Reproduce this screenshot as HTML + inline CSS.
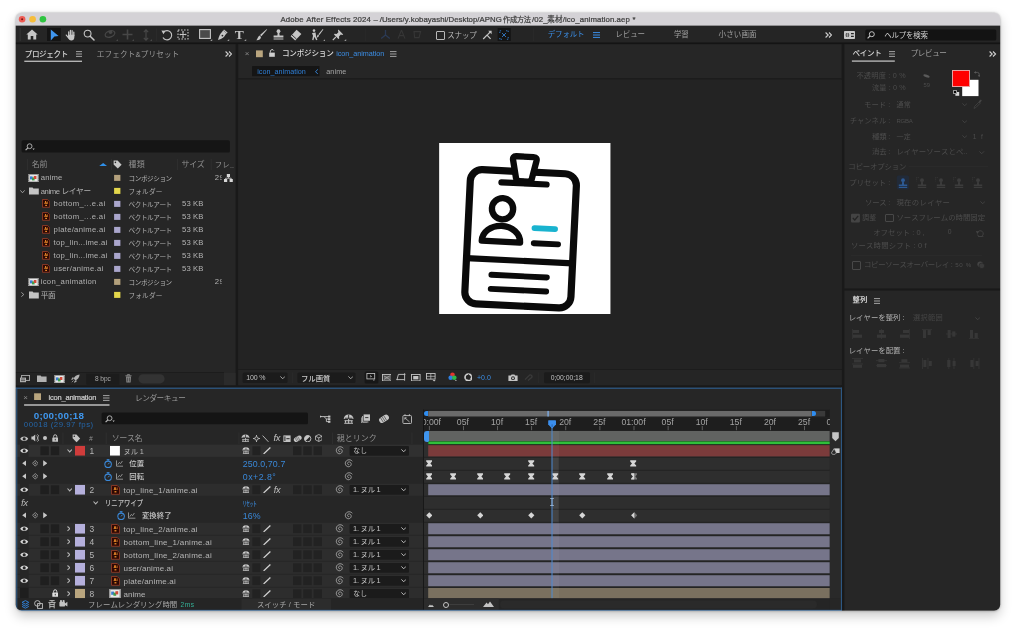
<!DOCTYPE html>
<html lang="ja"><head><meta charset="utf-8"><title>Adobe After Effects 2024</title>
<style>
html,body{margin:0;padding:0;background:#fff;}
#root{position:relative;width:1016px;height:630px;overflow:hidden;background:#fff;font-family:"Liberation Sans","Noto Sans CJK JP",sans-serif;}
#shadow{position:absolute;left:15.7px;top:12.8px;width:984.5px;height:598px;border-radius:6px;box-shadow:0 5px 12px rgba(0,0,0,.21),0 0 2.5px rgba(0,0,0,.32);}
#win{position:absolute;left:0;top:0;width:1016px;height:630px;clip-path:inset(12.8px 15.8px 19.2px 15.7px round 6px);will-change:transform;}
#win div,#win svg,#win span{position:absolute;}
#win span.t{white-space:nowrap;font-kerning:none;}
</style></head>
<body><div id="root"><div id="shadow"></div><div id="win">
<svg style="left:0;top:0;" width="1016" height="630" viewBox="0 0 1016 630"><rect x="0" y="0" width="1016" height="26" fill="#d4d2d6"/></svg>
<svg style="left:17px;top:14px;" width="32" height="11" viewBox="0 0 32 11"><circle cx="5.1" cy="5.3" r="3.3" fill="#ee5c54"/><circle cx="15.6" cy="5.3" r="3.3" fill="#f6bd3b"/><circle cx="25.9" cy="5.3" r="3.3" fill="#2fc441"/><circle cx="5.1" cy="5.3" r="1" fill="#7a1410"/></svg>
<span id="t1" class="t" style="left:280.49px;top:13.8px;font-size:7.8px;line-height:12px;color:#3c3c3c;letter-spacing:0.16px;-webkit-text-stroke:0.22px #3c3c3c;">Adobe After Effects 2024</span>
<span id="t2" class="t" style="left:373.4px;top:13.8px;font-size:7.8px;line-height:12px;color:#3c3c3c;-webkit-text-stroke:0.22px #3c3c3c;">–</span>
<span id="t3" class="t" style="left:379.69px;top:13.8px;font-size:7.8px;line-height:12px;color:#3c3c3c;letter-spacing:0.04px;-webkit-text-stroke:0.22px #3c3c3c;">/Users/y.kobayashi/Desktop/APNG</span>
<span id="t4" class="t" style="left:503.01px;top:13.7px;font-size:7.2px;line-height:12px;color:#3c3c3c;letter-spacing:-0.23px;-webkit-text-stroke:0.22px #3c3c3c;">作成方法</span>
<span id="t5" class="t" style="left:531.99px;top:13.8px;font-size:7.8px;line-height:12px;color:#3c3c3c;letter-spacing:0.15px;-webkit-text-stroke:0.22px #3c3c3c;">/02_</span>
<span id="t6" class="t" style="left:547.3px;top:13.7px;font-size:7.6px;line-height:12px;color:#3c3c3c;letter-spacing:0.02px;-webkit-text-stroke:0.22px #3c3c3c;">素材</span>
<span id="t7" class="t" style="left:562.79px;top:13.8px;font-size:7.8px;line-height:12px;color:#3c3c3c;letter-spacing:0.09px;-webkit-text-stroke:0.22px #3c3c3c;">/ico_animation.aep</span>
<span id="t8" class="t" style="left:632.6px;top:13.9px;font-size:7.8px;line-height:12px;color:#3c3c3c;-webkit-text-stroke:0.22px #3c3c3c;">*</span>
<svg style="left:0;top:0;" width="1016" height="630" viewBox="0 0 1016 630"><rect x="0" y="25.8" width="1016" height="17.4" fill="#1d1d1d"/><rect x="0" y="43.2" width="1016" height="586.8" fill="#191919"/><rect x="0" y="25.8" width="1016" height="16.8" fill="#252525"/><rect x="0" y="42.6" width="1016" height="1.6" fill="#141414"/><rect x="19.4" y="28" width="1.6" height="13" fill="#2f2f2f"/></svg>
<svg style="left:26.3px;top:29px;" width="12" height="11" viewBox="0 0 12 11"><path d="M6 0.6 L0.3 5.6 H1.8 V10.4 H4.7 V7 H7.3 V10.4 H10.2 V5.6 H11.7 Z" fill="#c6c6c6"/></svg>
<svg style="left:0;top:0;" width="1016" height="630" viewBox="0 0 1016 630"><rect x="47" y="28" width="13.8" height="13" fill="#141414"/></svg>
<svg style="left:49.8px;top:28.5px;" width="9" height="12" viewBox="0 0 9 12"><path d="M0.8 0.5 L8.6 7 L4.4 7.6 L0.8 11.5 Z" fill="#3f95ee"/></svg>
<svg style="left:65px;top:28.5px;" width="12" height="12" viewBox="0 0 12 12"><path d="M3.7 6.6 V2.8 M5.4 6 V1.3 M7.1 6 V1.5 M8.8 6.6 V3 M3.6 8.8 L1.3 6.1" stroke="#c6c6c6" stroke-width="1.25" stroke-linecap="round" fill="none"/><path d="M3.1 5.8 H9.4 V8 C9.4 10.4 8 11.5 6.4 11.5 C4.6 11.5 3.6 10.4 2.9 8.8 Z" fill="#c6c6c6"/></svg>
<svg style="left:82.5px;top:28.5px;" width="12" height="12" viewBox="0 0 12 12"><circle cx="4.6" cy="4.6" r="3.4" fill="none" stroke="#c6c6c6" stroke-width="1.1"/><path d="M7.2 7.2 L11 11" stroke="#c6c6c6" stroke-width="1.5" stroke-linecap="round"/></svg>
<svg style="left:103.9px;top:29px;" width="13" height="11" viewBox="0 0 13 11"><ellipse cx="6" cy="5" rx="5" ry="3" fill="none" stroke="#474747" stroke-width="1.2" transform="rotate(-20 6 5)"/><circle cx="6.5" cy="3.2" r="1.8" fill="#474747"/></svg>
<svg style="left:121.5px;top:29px;" width="11" height="11" viewBox="0 0 11 11"><path d="M5.5 0.5 V10.5 M0.5 5.5 H10.5" stroke="#474747" stroke-width="1.6"/></svg>
<svg style="left:143px;top:28.5px;" width="6" height="12" viewBox="0 0 6 12"><path d="M3 1 V11 M0.8 3.2 L3 0.8 L5.2 3.2 M0.8 8.8 L3 11.2 L5.2 8.8" stroke="#474747" stroke-width="1.2" fill="none"/></svg>
<svg style="left:115.5px;top:39px;" width="2" height="2" viewBox="0 0 2 2"><path d="M2 0 V2 H0 Z" fill="#474747"/></svg>
<svg style="left:131.5px;top:39px;" width="2" height="2" viewBox="0 0 2 2"><path d="M2 0 V2 H0 Z" fill="#474747"/></svg>
<svg style="left:149.5px;top:39px;" width="2" height="2" viewBox="0 0 2 2"><path d="M2 0 V2 H0 Z" fill="#474747"/></svg>
<svg style="left:0;top:0;" width="1016" height="630" viewBox="0 0 1016 630"><rect x="156" y="28.5" width="0.8" height="12.5" fill="#2c2c2c"/></svg>
<svg style="left:160.5px;top:28.5px;" width="12" height="12" viewBox="0 0 12 12"><path d="M2.6 3.2 A4.6 4.6 0 1 1 2 8.4" fill="none" stroke="#c6c6c6" stroke-width="1.1"/><path d="M0.4 1.6 L4.6 1.8 L2.4 5.2 Z" fill="#c6c6c6"/></svg>
<svg style="left:177.2px;top:29px;" width="12" height="11" viewBox="0 0 12 11"><rect x="1" y="1" width="10" height="9" fill="none" stroke="#c6c6c6" stroke-width="1.1" stroke-dasharray="1.6 1.4"/><path d="M6 2.6 V8.4 M3 5.5 H9" stroke="#c6c6c6" stroke-width="1"/><path d="M6 1.8 L7 3.2 H5 Z M6 9.2 L7 7.8 H5 Z M2.2 5.5 L3.6 4.5 V6.5 Z M9.8 5.5 L8.4 4.5 V6.5 Z" fill="#c6c6c6"/></svg>
<svg style="left:199.2px;top:29.1px;" width="12" height="10" viewBox="0 0 12 10"><rect x="0.6" y="0.6" width="10.8" height="8.8" fill="#4a4a4a" stroke="#c6c6c6" stroke-width="1.1"/></svg>
<svg style="left:216.9px;top:28.5px;" width="11" height="12" viewBox="0 0 11 12"><path d="M6.2 1.2 L9.6 4.4 L8.4 5.8 C7.6 8 5.4 9.8 1 11 C2 6.8 3.4 4.6 5 3 Z" fill="#c6c6c6"/><path d="M7 0.4 L10.6 3.6 L9.8 4.4 L6.4 1.2 Z" fill="#c6c6c6"/><circle cx="5.4" cy="6.6" r="0.9" fill="#252525"/></svg>
<span id="t9" class="t" style="left:239.3px;top:28.5px;font-size:13.5px;line-height:12px;color:#c6c6c6;font-weight:700;transform:translateX(-50%);font-family:'Liberation Serif',serif;">T</span>
<svg style="left:255.5px;top:28.5px;" width="12" height="12" viewBox="0 0 12 12"><path d="M11.2 0.6 L5.4 7.2 L4 6 L10.6 0.2 Z" fill="#c6c6c6"/><path d="M3.6 6.6 L5 8 C4.8 10.4 2.6 11.4 0.4 11.2 C1.8 10 1.6 7.4 3.6 6.6 Z" fill="#c6c6c6"/></svg>
<svg style="left:272.6px;top:29px;" width="11" height="11" viewBox="0 0 11 11"><circle cx="5.5" cy="2.2" r="1.9" fill="#c6c6c6"/><path d="M4.7 3.4 H6.3 L6.6 6.6 H10.4 V8.6 H0.6 V6.6 H4.4 Z M0.6 9.4 H10.4 V10.6 H0.6 Z" fill="#c6c6c6"/></svg>
<svg style="left:289.6px;top:28.5px;" width="12" height="12" viewBox="0 0 12 12"><path d="M6.6 0.8 L11.4 5 L5.2 11.4 L0.6 7.2 Z" fill="#c6c6c6"/><path d="M1.9 5.9 L6.5 10.1" stroke="#252525" stroke-width="0.9"/></svg>
<svg style="left:311px;top:28.5px;" width="13" height="12" viewBox="0 0 13 12"><circle cx="3" cy="1.6" r="1.3" fill="#c6c6c6"/><path d="M1 4 L4.6 3.6 L5 7 L6.4 10.8 L5.2 11.2 L3.4 7.8 L2.4 11.2 L1.2 11 L2 6.8 Z" fill="#c6c6c6"/><path d="M12.4 0.4 L8.4 6 L7.4 5.2 L11.8 0 Z" fill="#c6c6c6"/><path d="M7 5.6 L8 6.6 C7.8 8.2 6.6 8.6 5.6 8.4 C6.4 7.6 6 6.2 7 5.6 Z" fill="#c6c6c6"/></svg>
<svg style="left:332.1px;top:28.5px;" width="12" height="12" viewBox="0 0 12 12"><path d="M6.4 0.6 L11.2 5.4 L10.2 6 L8.8 5.6 L7 7.4 L7.2 9.4 L6.4 10 L2 5.6 L2.6 4.8 L4.6 5 L6.4 3.2 L6 1.6 Z" fill="#c6c6c6"/><path d="M3.8 8 L0.8 11.2" stroke="#c6c6c6" stroke-width="1.1"/></svg>
<svg style="left:210.4px;top:38.9px;" width="2.2" height="2.2" viewBox="0 0 2.2 2.2"><path d="M2.2 0 V2.2 H0 Z" fill="#9a9a9a"/></svg>
<svg style="left:227.4px;top:38.9px;" width="2.2" height="2.2" viewBox="0 0 2.2 2.2"><path d="M2.2 0 V2.2 H0 Z" fill="#9a9a9a"/></svg>
<svg style="left:244.4px;top:38.9px;" width="2.2" height="2.2" viewBox="0 0 2.2 2.2"><path d="M2.2 0 V2.2 H0 Z" fill="#9a9a9a"/></svg>
<svg style="left:322.9px;top:38.9px;" width="2.2" height="2.2" viewBox="0 0 2.2 2.2"><path d="M2.2 0 V2.2 H0 Z" fill="#9a9a9a"/></svg>
<svg style="left:344.4px;top:38.9px;" width="2.2" height="2.2" viewBox="0 0 2.2 2.2"><path d="M2.2 0 V2.2 H0 Z" fill="#9a9a9a"/></svg>
<svg style="left:0;top:0;" width="1016" height="630" viewBox="0 0 1016 630"><rect x="365.5" y="28.5" width="0.7" height="12.5" fill="#2c2c2c"/></svg>
<svg style="left:379.5px;top:29px;" width="11" height="11" viewBox="0 0 11 11"><path d="M5.5 1 V6 L1.2 9.6 M5.5 6 L9.8 9.6" stroke="#2b3a55" stroke-width="1.3" fill="none"/></svg>
<svg style="left:395.9px;top:29px;" width="11" height="11" viewBox="0 0 11 11"><path d="M5.5 1 L2 9.6 M5.5 1 L9 9.6 M3.2 6.6 H7.8" stroke="#363636" stroke-width="1.1" fill="none"/></svg>
<svg style="left:412.1px;top:29px;" width="11" height="11" viewBox="0 0 11 11"><path d="M2 2.6 H8.6 L7 8.6 H2.6 Z" stroke="#363636" stroke-width="1.1" fill="none"/></svg>
<div style="left:435.6px;top:31px;width:9.4px;height:9px;box-sizing:border-box;border:1.1px solid #b8b8b8;border-radius:1px;"></div>
<span id="t10" class="t" style="left:447.3px;top:30.2px;font-size:7.5px;line-height:12px;color:#b8b8b8;letter-spacing:-0.2px;">スナップ</span>
<svg style="left:482px;top:30px;" width="10" height="10" viewBox="0 0 10 10"><path d="M1.2 9 L5 5.2 L8.6 8.8" stroke="#c6c6c6" stroke-width="1.2" fill="none"/><path d="M5.4 4.8 L8.2 2" stroke="#c6c6c6" stroke-width="1.1"/><path d="M6.2 0.8 H9.6 V4.2 Z" fill="#c6c6c6"/></svg>
<svg style="left:0;top:0;" width="1016" height="630" viewBox="0 0 1016 630"><rect x="497.6" y="28" width="13.2" height="13" fill="#141414"/></svg>
<svg style="left:499px;top:29.5px;" width="10" height="10" viewBox="0 0 10 10"><path d="M0.8 3 V0.8 H3 M7 0.8 H9.2 V3 M9.2 7 V9.2 H7 M3 9.2 H0.8 V7" stroke="#2f6fb4" stroke-width="1.1" fill="none" stroke-dasharray="1.3 0.9"/><path d="M3 3 L7 7 M7 3 L3 7" stroke="#2f6fb4" stroke-width="1"/></svg>
<svg style="left:0;top:0;" width="1016" height="630" viewBox="0 0 1016 630"><rect x="533" y="28.5" width="0.7" height="12.5" fill="#2c2c2c"/></svg>
<span id="t11" class="t" style="left:547.7px;top:29.4px;font-size:7.5px;line-height:12px;color:#3b8ee6;letter-spacing:-0.15px;">デフォルト</span>
<svg style="left:593.3px;top:31.6px;" width="7" height="6" viewBox="0 0 7 6"><path d="M0 0.6 H7 M0 3 H7 M0 5.4 H7" stroke="#3b8ee6" stroke-width="1"/></svg>
<span id="t12" class="t" style="left:615.2px;top:29.4px;font-size:7.5px;line-height:12px;color:#a0a0a0;letter-spacing:-0.03px;">レビュー</span>
<span id="t13" class="t" style="left:674px;top:29.4px;font-size:7.5px;line-height:12px;color:#a0a0a0;letter-spacing:-0.2px;">学習</span>
<span id="t14" class="t" style="left:718.5px;top:29.4px;font-size:7.5px;line-height:12px;color:#a0a0a0;letter-spacing:0.15px;">小さい画面</span>
<svg style="left:824.6px;top:31.6px;" width="7.4" height="6" viewBox="0 0 7.4 6"><path d="M0.6 0.5 L3.2 3 L0.6 5.5 M4 0.5 L6.6 3 L4 5.5" fill="none" stroke="#d0d0d0" stroke-width="1.1"/></svg>
<svg style="left:844px;top:30.8px;" width="11" height="8" viewBox="0 0 11 8"><rect x="0" y="0" width="11" height="8" rx="0.8" fill="#c8c8c8"/><circle cx="3.4" cy="4" r="1.9" fill="#252525"/><path d="M3.4 1.4 V6.6 M0.8 4 H6" stroke="#c8c8c8" stroke-width="0.7"/><path d="M7 2.6 H9.8 M7 5.4 H9.8" stroke="#252525" stroke-width="1.1"/></svg>
<svg style="left:0;top:0;" width="1016" height="630" viewBox="0 0 1016 630"><rect x="865.3" y="29.5" width="131" height="11" fill="#131313" rx="1.5"/></svg>
<svg style="left:867.3px;top:31px;" width="8" height="8" viewBox="0 0 8 8"><circle cx="4.8" cy="3.2" r="2.5" fill="none" stroke="#c0c0c0" stroke-width="1"/><path d="M3 5 L0.6 7.4" stroke="#c0c0c0" stroke-width="1.2"/></svg>
<span id="t15" class="t" style="left:884.2px;top:29.8px;font-size:7.5px;line-height:12px;color:#d0d0d0;letter-spacing:-0.22px;">ヘルプを検索</span>
<svg style="left:0;top:0;" width="1016" height="630" viewBox="0 0 1016 630"><rect x="0" y="44.2" width="235.6" height="341" fill="#262626"/></svg>
<span id="t16" class="t" style="left:24.7px;top:48.6px;font-size:7.6px;line-height:12px;color:#d2d2d2;font-weight:500;letter-spacing:-0.39px;">プロジェクト</span>
<svg style="left:75.75px;top:51px;" width="6.5" height="6" viewBox="0 0 6.5 6"><path d="M0 0.6 H6.5 M0 3 H6.5 M0 5.4 H6.5" stroke="#b0b0b0" stroke-width="0.9"/></svg>
<svg style="left:0;top:0;" width="1016" height="630" viewBox="0 0 1016 630"><rect x="24.3" y="60.6" width="57.7" height="1.4" fill="#b4b4b4"/></svg>
<span id="t17" class="t" style="left:96.7px;top:48.6px;font-size:7.6px;line-height:12px;color:#9a9a9a;letter-spacing:0.16px;">エフェクト&amp;プリセット</span>
<svg style="left:224.6px;top:50.8px;" width="7.4" height="6" viewBox="0 0 7.4 6"><path d="M0.6 0.5 L3.2 3 L0.6 5.5 M4 0.5 L6.6 3 L4 5.5" fill="none" stroke="#d0d0d0" stroke-width="1.1"/></svg>
<svg style="left:0;top:0;" width="1016" height="630" viewBox="0 0 1016 630"><rect x="21.6" y="140.2" width="208.3" height="12.2" fill="#151515" rx="1.5"/></svg>
<svg style="left:24.6px;top:142.6px;" width="10" height="8" viewBox="0 0 10 8"><circle cx="4.6" cy="3.2" r="2.4" fill="none" stroke="#b8b8b8" stroke-width="0.9"/><path d="M2.8 5 L0.6 7.2" stroke="#b8b8b8" stroke-width="1.1"/><path d="M7.4 5.6 H9.8 L8.6 7 Z" fill="#b8b8b8"/></svg>
<svg style="left:0;top:0;" width="1016" height="630" viewBox="0 0 1016 630"><rect x="27.2" y="159" width="0.7" height="11" fill="#333333"/><rect x="111" y="159" width="0.7" height="11" fill="#333333"/><rect x="177" y="159" width="0.7" height="11" fill="#333333"/><rect x="210.8" y="159" width="0.7" height="11" fill="#333333"/></svg>
<span id="t18" class="t" style="left:31.68px;top:159.4px;font-size:8px;line-height:12px;color:#8f8f8f;letter-spacing:-0.06px;">名前</span>
<svg style="left:99px;top:163.2px;" width="8.4" height="3.2" viewBox="0 0 8.4 3.2"><path d="M0 3.2 L4.2 0 L8.4 3.2 Z" fill="#2f8fe8"/></svg>
<svg style="left:113px;top:160.1px;" width="9" height="9" viewBox="0 0 9 9"><path d="M0.6 0.6 H4.6 L8.6 4.8 L4.8 8.6 L0.6 4.4 Z" fill="#c8c8c8"/><circle cx="2.4" cy="2.4" r="0.8" fill="#262626"/></svg>
<span id="t19" class="t" style="left:128.48px;top:159.4px;font-size:8px;line-height:12px;color:#8f8f8f;letter-spacing:0.24px;">種類</span>
<span id="t20" class="t" style="left:181.58px;top:159.4px;font-size:8px;line-height:12px;color:#8f8f8f;letter-spacing:-0.43px;">サイズ</span>
<span id="t21" class="t" style="left:214.7px;top:159.4px;font-size:7.4px;line-height:12px;color:#8f8f8f;letter-spacing:0.29px;">フレ</span>
<span id="t22" class="t" style="left:230px;top:160.4px;font-size:7px;line-height:12px;color:#8f8f8f;">..</span>
<svg style="left:27.9px;top:173.7px;" width="11" height="8.4" viewBox="0 0 11 8.4"><rect x="0" y="0" width="11" height="8.4" fill="#9a9a9a"/><rect x="1.4" y="1" width="8.2" height="6.4" fill="#e8e8e8"/><rect x="2" y="2.4" width="2.6" height="3" fill="#3a7bd0"/><rect x="4" y="3.4" width="2.6" height="3" fill="#3da04a"/><rect x="5.8" y="2" width="2.6" height="3" fill="#d04a3a"/><path d="M0.4 1.2 H1 M0.4 3 H1 M0.4 4.8 H1 M0.4 6.6 H1 M10 1.2 H10.6 M10 3 H10.6 M10 4.8 H10.6 M10 6.6 H10.6" stroke="#333" stroke-width="0.7"/></svg>
<span id="t23" class="t" style="left:40.69px;top:172.2px;font-size:7.7px;line-height:12px;color:#b2b2b2;letter-spacing:0.17px;">anime</span>
<svg style="left:0;top:0;" width="1016" height="630" viewBox="0 0 1016 630"><rect x="114.1" y="174.9" width="6.3" height="6" fill="#b3a07c"/></svg>
<span id="t24" class="t" style="left:128.54px;top:172.7px;font-size:6.6px;line-height:12px;color:#b2b2b2;letter-spacing:-0.42px;">コンポジション</span>
<span id="t25" class="t" style="left:214.69px;top:172.2px;font-size:7.7px;line-height:12px;color:#b2b2b2;letter-spacing:0.55px;">29</span>
<svg style="left:0;top:0;" width="1016" height="630" viewBox="0 0 1016 630"><rect x="221.8" y="172.9" width="4.2" height="10" fill="#262626"/></svg>
<svg style="left:19.8px;top:189.5px;" width="5" height="3.4" viewBox="0 0 5 3.4"><path d="M0.4 0.4 L2.5 2.8 L4.6 0.4" stroke="#a8a8a8" stroke-width="0.9" fill="none"/></svg>
<svg style="left:28.8px;top:187.1px;" width="9.8" height="7.6" viewBox="0 0 9.8 7.6"><path d="M0 0.4 H3.6 L4.4 1.4 H9.8 V7.6 H0 Z" fill="#c4c4c4"/></svg>
<span id="t26" class="t" style="left:40.69px;top:185.7px;font-size:7.7px;line-height:12px;color:#b2b2b2;letter-spacing:-0.38px;">anime レイヤー</span>
<svg style="left:0;top:0;" width="1016" height="630" viewBox="0 0 1016 630"><rect x="114.1" y="187.9" width="6.3" height="6" fill="#e3d64b"/></svg>
<span id="t27" class="t" style="left:128.54px;top:185.7px;font-size:6.6px;line-height:12px;color:#b2b2b2;letter-spacing:0.19px;">フォルダー</span>
<svg style="left:42.2px;top:199.2px;" width="8.2" height="8.8" viewBox="0 0 8.2 8.8"><path d="M0.5 0.5 H5.6 L7.7 2.6 V8.3 H0.5 Z" fill="#2e0904" stroke="#a2402a" stroke-width="0.75"/><text x="4.1" y="4.7" font-size="3.9" font-weight="700" fill="#ff9a2e" text-anchor="middle" font-family="Liberation Sans,sans-serif">Ai</text><rect x="3.2" y="5.8" width="1.8" height="1.1" fill="#ff9a2e"/></svg>
<span id="t28" class="t" style="left:53.59px;top:198.2px;font-size:7.7px;line-height:12px;color:#b2b2b2;letter-spacing:0.39px;">bottom_...e.ai</span>
<svg style="left:0;top:0;" width="1016" height="630" viewBox="0 0 1016 630"><rect x="114.1" y="200.9" width="6.3" height="6" fill="#aaa6cc"/></svg>
<span id="t29" class="t" style="left:128.54px;top:198.7px;font-size:6.6px;line-height:12px;color:#b2b2b2;letter-spacing:-0.42px;">ベクトルアート</span>
<span id="t30" class="t" style="left:181.99px;top:198.2px;font-size:7.7px;line-height:12px;color:#b2b2b2;letter-spacing:0.12px;">53 KB</span>
<svg style="left:42.2px;top:212.2px;" width="8.2" height="8.8" viewBox="0 0 8.2 8.8"><path d="M0.5 0.5 H5.6 L7.7 2.6 V8.3 H0.5 Z" fill="#2e0904" stroke="#a2402a" stroke-width="0.75"/><text x="4.1" y="4.7" font-size="3.9" font-weight="700" fill="#ff9a2e" text-anchor="middle" font-family="Liberation Sans,sans-serif">Ai</text><rect x="3.2" y="5.8" width="1.8" height="1.1" fill="#ff9a2e"/></svg>
<span id="t31" class="t" style="left:53.59px;top:211.2px;font-size:7.7px;line-height:12px;color:#b2b2b2;letter-spacing:0.39px;">bottom_...e.ai</span>
<svg style="left:0;top:0;" width="1016" height="630" viewBox="0 0 1016 630"><rect x="114.1" y="213.9" width="6.3" height="6" fill="#aaa6cc"/></svg>
<span id="t32" class="t" style="left:128.54px;top:211.7px;font-size:6.6px;line-height:12px;color:#b2b2b2;letter-spacing:-0.42px;">ベクトルアート</span>
<span id="t33" class="t" style="left:181.99px;top:211.2px;font-size:7.7px;line-height:12px;color:#b2b2b2;letter-spacing:0.12px;">53 KB</span>
<svg style="left:42.2px;top:225.2px;" width="8.2" height="8.8" viewBox="0 0 8.2 8.8"><path d="M0.5 0.5 H5.6 L7.7 2.6 V8.3 H0.5 Z" fill="#2e0904" stroke="#a2402a" stroke-width="0.75"/><text x="4.1" y="4.7" font-size="3.9" font-weight="700" fill="#ff9a2e" text-anchor="middle" font-family="Liberation Sans,sans-serif">Ai</text><rect x="3.2" y="5.8" width="1.8" height="1.1" fill="#ff9a2e"/></svg>
<span id="t34" class="t" style="left:53.59px;top:224.2px;font-size:7.7px;line-height:12px;color:#b2b2b2;letter-spacing:0.29px;">plate/anime.ai</span>
<svg style="left:0;top:0;" width="1016" height="630" viewBox="0 0 1016 630"><rect x="114.1" y="226.9" width="6.3" height="6" fill="#aaa6cc"/></svg>
<span id="t35" class="t" style="left:128.54px;top:224.7px;font-size:6.6px;line-height:12px;color:#b2b2b2;letter-spacing:-0.42px;">ベクトルアート</span>
<span id="t36" class="t" style="left:181.99px;top:224.2px;font-size:7.7px;line-height:12px;color:#b2b2b2;letter-spacing:0.12px;">53 KB</span>
<svg style="left:42.2px;top:238.2px;" width="8.2" height="8.8" viewBox="0 0 8.2 8.8"><path d="M0.5 0.5 H5.6 L7.7 2.6 V8.3 H0.5 Z" fill="#2e0904" stroke="#a2402a" stroke-width="0.75"/><text x="4.1" y="4.7" font-size="3.9" font-weight="700" fill="#ff9a2e" text-anchor="middle" font-family="Liberation Sans,sans-serif">Ai</text><rect x="3.2" y="5.8" width="1.8" height="1.1" fill="#ff9a2e"/></svg>
<span id="t37" class="t" style="left:53.59px;top:237.2px;font-size:7.7px;line-height:12px;color:#b2b2b2;letter-spacing:0.28px;">top_lin...ime.ai</span>
<svg style="left:0;top:0;" width="1016" height="630" viewBox="0 0 1016 630"><rect x="114.1" y="239.9" width="6.3" height="6" fill="#aaa6cc"/></svg>
<span id="t38" class="t" style="left:128.54px;top:237.7px;font-size:6.6px;line-height:12px;color:#b2b2b2;letter-spacing:-0.42px;">ベクトルアート</span>
<span id="t39" class="t" style="left:181.99px;top:237.2px;font-size:7.7px;line-height:12px;color:#b2b2b2;letter-spacing:0.12px;">53 KB</span>
<svg style="left:42.2px;top:251.2px;" width="8.2" height="8.8" viewBox="0 0 8.2 8.8"><path d="M0.5 0.5 H5.6 L7.7 2.6 V8.3 H0.5 Z" fill="#2e0904" stroke="#a2402a" stroke-width="0.75"/><text x="4.1" y="4.7" font-size="3.9" font-weight="700" fill="#ff9a2e" text-anchor="middle" font-family="Liberation Sans,sans-serif">Ai</text><rect x="3.2" y="5.8" width="1.8" height="1.1" fill="#ff9a2e"/></svg>
<span id="t40" class="t" style="left:53.59px;top:250.2px;font-size:7.7px;line-height:12px;color:#b2b2b2;letter-spacing:0.28px;">top_lin...ime.ai</span>
<svg style="left:0;top:0;" width="1016" height="630" viewBox="0 0 1016 630"><rect x="114.1" y="252.9" width="6.3" height="6" fill="#aaa6cc"/></svg>
<span id="t41" class="t" style="left:128.54px;top:250.7px;font-size:6.6px;line-height:12px;color:#b2b2b2;letter-spacing:-0.42px;">ベクトルアート</span>
<span id="t42" class="t" style="left:181.99px;top:250.2px;font-size:7.7px;line-height:12px;color:#b2b2b2;letter-spacing:0.12px;">53 KB</span>
<svg style="left:42.2px;top:264.2px;" width="8.2" height="8.8" viewBox="0 0 8.2 8.8"><path d="M0.5 0.5 H5.6 L7.7 2.6 V8.3 H0.5 Z" fill="#2e0904" stroke="#a2402a" stroke-width="0.75"/><text x="4.1" y="4.7" font-size="3.9" font-weight="700" fill="#ff9a2e" text-anchor="middle" font-family="Liberation Sans,sans-serif">Ai</text><rect x="3.2" y="5.8" width="1.8" height="1.1" fill="#ff9a2e"/></svg>
<span id="t43" class="t" style="left:53.59px;top:263.2px;font-size:7.7px;line-height:12px;color:#b2b2b2;letter-spacing:0.3px;">user/anime.ai</span>
<svg style="left:0;top:0;" width="1016" height="630" viewBox="0 0 1016 630"><rect x="114.1" y="265.9" width="6.3" height="6" fill="#aaa6cc"/></svg>
<span id="t44" class="t" style="left:128.54px;top:263.7px;font-size:6.6px;line-height:12px;color:#b2b2b2;letter-spacing:-0.42px;">ベクトルアート</span>
<span id="t45" class="t" style="left:181.99px;top:263.2px;font-size:7.7px;line-height:12px;color:#b2b2b2;letter-spacing:0.12px;">53 KB</span>
<svg style="left:27.9px;top:277.7px;" width="11" height="8.4" viewBox="0 0 11 8.4"><rect x="0" y="0" width="11" height="8.4" fill="#9a9a9a"/><rect x="1.4" y="1" width="8.2" height="6.4" fill="#e8e8e8"/><rect x="2" y="2.4" width="2.6" height="3" fill="#3a7bd0"/><rect x="4" y="3.4" width="2.6" height="3" fill="#3da04a"/><rect x="5.8" y="2" width="2.6" height="3" fill="#d04a3a"/><path d="M0.4 1.2 H1 M0.4 3 H1 M0.4 4.8 H1 M0.4 6.6 H1 M10 1.2 H10.6 M10 3 H10.6 M10 4.8 H10.6 M10 6.6 H10.6" stroke="#333" stroke-width="0.7"/></svg>
<span id="t46" class="t" style="left:40.69px;top:276.2px;font-size:7.7px;line-height:12px;color:#b2b2b2;letter-spacing:0.3px;">icon_animation</span>
<svg style="left:0;top:0;" width="1016" height="630" viewBox="0 0 1016 630"><rect x="114.1" y="278.9" width="6.3" height="6" fill="#b3a07c"/></svg>
<span id="t47" class="t" style="left:128.54px;top:276.7px;font-size:6.6px;line-height:12px;color:#b2b2b2;letter-spacing:-0.42px;">コンポジション</span>
<span id="t48" class="t" style="left:214.69px;top:276.2px;font-size:7.7px;line-height:12px;color:#b2b2b2;letter-spacing:0.55px;">29</span>
<svg style="left:0;top:0;" width="1016" height="630" viewBox="0 0 1016 630"><rect x="221.8" y="276.9" width="4.2" height="10" fill="#262626"/></svg>
<svg style="left:20.6px;top:292.4px;" width="3.4" height="5" viewBox="0 0 3.4 5"><path d="M0.4 0.4 L2.8 2.5 L0.4 4.6" stroke="#a8a8a8" stroke-width="0.9" fill="none"/></svg>
<svg style="left:28.8px;top:291.1px;" width="9.8" height="7.6" viewBox="0 0 9.8 7.6"><path d="M0 0.4 H3.6 L4.4 1.4 H9.8 V7.6 H0 Z" fill="#c4c4c4"/></svg>
<span id="t49" class="t" style="left:40.69px;top:289.7px;font-size:7.7px;line-height:12px;color:#b2b2b2;letter-spacing:-0.28px;">平面</span>
<svg style="left:0;top:0;" width="1016" height="630" viewBox="0 0 1016 630"><rect x="114.1" y="291.9" width="6.3" height="6" fill="#e3d64b"/></svg>
<span id="t50" class="t" style="left:128.54px;top:289.7px;font-size:6.6px;line-height:12px;color:#b2b2b2;letter-spacing:0.19px;">フォルダー</span>
<svg style="left:224.4px;top:173.9px;" width="8.8" height="8" viewBox="0 0 8.8 8"><rect x="2.8" y="0" width="3.2" height="3" fill="#d8d8d8"/><rect x="0" y="5" width="3.2" height="3" fill="#d8d8d8"/><rect x="5.6" y="5" width="3.2" height="3" fill="#d8d8d8"/><path d="M4.4 3 V4.2 M1.6 5 V4.2 H7.2 V5" stroke="#d8d8d8" stroke-width="0.8" fill="none"/></svg>
<svg style="left:0;top:0;" width="1016" height="630" viewBox="0 0 1016 630"><rect x="0" y="372.7" width="235.6" height="12.5" fill="#232323"/><rect x="0" y="372.2" width="224" height="0.7" fill="#1b1b1b"/></svg>
<svg style="left:19.6px;top:374.8px;" width="10" height="8" viewBox="0 0 10 8"><rect x="1.6" y="0.4" width="8" height="5" fill="none" stroke="#b2b2b2" stroke-width="0.9"/><rect x="0" y="2.6" width="6" height="4.6" fill="#b2b2b2"/><path d="M1 4 H5 M1 5.6 H5" stroke="#252525" stroke-width="0.6"/></svg>
<svg style="left:37px;top:375.2px;" width="9.6" height="7.2" viewBox="0 0 9.6 7.2"><path d="M0 0.4 H3.6 L4.4 1.4 H9.6 V7.2 H0 Z" fill="#b2b2b2"/></svg>
<svg style="left:53.6px;top:374.8px;" width="11" height="8" viewBox="0 0 11 8"><rect x="0" y="0" width="11" height="8.4" fill="#9a9a9a"/><rect x="1.4" y="1" width="8.2" height="6.4" fill="#e8e8e8"/><rect x="2" y="2.4" width="2.6" height="3" fill="#3a7bd0"/><rect x="4" y="3.4" width="2.6" height="3" fill="#3da04a"/><rect x="5.8" y="2" width="2.6" height="3" fill="#d04a3a"/><path d="M0.4 1.2 H1 M0.4 3 H1 M0.4 4.8 H1 M0.4 6.6 H1 M10 1.2 H10.6 M10 3 H10.6 M10 4.8 H10.6 M10 6.6 H10.6" stroke="#333" stroke-width="0.7"/></svg>
<svg style="left:70.9px;top:374.1px;" width="9" height="9" viewBox="0 0 9 9"><path d="M8.6 0.4 C5.6 0.6 3.6 2.2 2.6 4.6 L4.4 6.4 C6.8 5.4 8.4 3.4 8.6 0.4 Z" fill="#b2b2b2"/><path d="M2.2 5 L0.6 5.4 L2 3.4 Z M4 6.8 L3.6 8.4 L5.6 7 Z M2.6 6.4 L0.8 8.2" fill="#b2b2b2" stroke="#b2b2b2" stroke-width="0.7"/></svg>
<svg style="left:0;top:0;" width="1016" height="630" viewBox="0 0 1016 630"><rect x="86.4" y="373.6" width="33" height="11" fill="#1c1c1c"/></svg>
<span id="t51" class="t" style="left:95.04px;top:373.3px;font-size:6.6px;line-height:12px;color:#a8a8a8;letter-spacing:-0.1px;">8 bpc</span>
<svg style="left:124.8px;top:374.1px;" width="7" height="9" viewBox="0 0 7 9"><path d="M0.4 1.8 H6.6 M2.4 1.6 V0.6 H4.6 V1.6" stroke="#8a8a8a" stroke-width="0.9" fill="none"/><path d="M1 2.6 H6 L5.6 8.6 H1.4 Z" fill="#8a8a8a"/><path d="M2.6 3.6 V7.6 M4.4 3.6 V7.6" stroke="#262626" stroke-width="0.6"/></svg>
<svg style="left:0;top:0;" width="1016" height="630" viewBox="0 0 1016 630"><rect x="138.4" y="374.2" width="26.2" height="9.2" fill="#333333" rx="4.6"/><rect x="224" y="372.7" width="11.6" height="12.5" fill="#2b2b2b"/><rect x="238.2" y="44.2" width="603.4" height="341" fill="#262626"/></svg>
<span id="t52" class="t" style="left:247px;top:47.9px;font-size:8px;line-height:12px;color:#8a8a8a;transform:translateX(-50%);">×</span>
<svg style="left:0;top:0;" width="1016" height="630" viewBox="0 0 1016 630"><rect x="256" y="50.4" width="6.8" height="6.8" fill="#b9a57e"/></svg>
<svg style="left:269.2px;top:49.4px;" width="6" height="8" viewBox="0 0 6 8"><path d="M1.4 3.6 V2.2 A1.8 1.8 0 0 1 4.8 1.6" fill="none" stroke="#d0d0d0" stroke-width="1"/><rect x="0.2" y="3.6" width="5.6" height="4.2" fill="#d0d0d0"/></svg>
<span id="t53" class="t" style="left:282px;top:48.1px;font-size:7.6px;line-height:12px;color:#dcdcdc;font-weight:500;letter-spacing:-0.23px;">コンポジション</span>
<span id="t54" class="t" style="left:336.21px;top:48.3px;font-size:7.2px;line-height:12px;color:#3b8ee6;letter-spacing:-0.02px;">icon_animation</span>
<svg style="left:390.05px;top:51px;" width="6.5" height="6" viewBox="0 0 6.5 6"><path d="M0 0.6 H6.5 M0 3 H6.5 M0 5.4 H6.5" stroke="#b0b0b0" stroke-width="0.9"/></svg>
<svg style="left:0;top:0;" width="1016" height="630" viewBox="0 0 1016 630"><rect x="252.1" y="66.1" width="67.4" height="10.1" fill="#151515"/></svg>
<span id="t55" class="t" style="left:257.21px;top:65.7px;font-size:7.2px;line-height:12px;color:#2f7fd6;letter-spacing:0.02px;">icon_animation</span>
<svg style="left:314.5px;top:68.5px;" width="3.4" height="5.4" viewBox="0 0 3.4 5.4"><path d="M2.9 0.4 L0.5 2.7 L2.9 5" stroke="#3b8ee6" stroke-width="0.9" fill="none"/></svg>
<span id="t56" class="t" style="left:326.21px;top:65.7px;font-size:7.2px;line-height:12px;color:#a8a8a8;letter-spacing:0.12px;">anime</span>
<svg style="left:0;top:0;" width="1016" height="630" viewBox="0 0 1016 630"><rect x="238.2" y="78.5" width="603.4" height="1" fill="#121212"/><rect x="238.2" y="79.5" width="603.4" height="290.1" fill="#232323"/></svg>
<svg style="left:439.2px;top:142.9px;" width="171.6" height="171.3" viewBox="0 0 500 500"><rect width="500" height="500" fill="#fff"/><g transform="rotate(2.8 250 70.7)" fill="none" stroke="#0a0a0a" stroke-linecap="round" stroke-linejoin="round">
<rect x="93" y="84" width="310" height="392" rx="34" ry="34" stroke-width="21"/>
<path d="M93 344 H403" stroke-width="18"/>
<path d="M224 40 H274 Q286 40 283 52 L272 104 Q270 112 262 112 H236 Q228 112 226 104 L215 52 Q212 40 224 40 Z" fill="#fff" stroke-width="18.5"/>
<path d="M184 118 H316" stroke-width="18"/>
<circle cx="191" cy="195" r="31" stroke-width="18.5"/>
<path d="M135 291 A56 46 0 0 1 247 291 Z" stroke-width="18.5"/>
<path d="M287 247 H347" stroke="#19b3cf" stroke-width="17"/>
<path d="M287 291 H358" stroke-width="17"/>
<path d="M168 389 H330" stroke-width="17"/>
<path d="M168 430 H330" stroke-width="17"/>
</g></svg>
<svg style="left:0;top:0;" width="1016" height="630" viewBox="0 0 1016 630"><rect x="238.2" y="369.6" width="603.4" height="15.6" fill="#252525"/><rect x="238.2" y="369.2" width="603.4" height="0.7" fill="#1a1a1a"/><rect x="242.6" y="372.4" width="45" height="10.6" fill="#1b1b1b" rx="1.5"/></svg>
<span id="t57" class="t" style="left:246.32px;top:372.2px;font-size:7px;line-height:12px;color:#c0c0c0;letter-spacing:-0.15px;">100 %</span>
<svg style="left:279.9px;top:376.1px;" width="5.4" height="3.4" viewBox="0 0 5.4 3.4"><path d="M0.4 0.4 L2.7 2.8 L5 0.4" stroke="#b0b0b0" stroke-width="0.9" fill="none"/></svg>
<svg style="left:0;top:0;" width="1016" height="630" viewBox="0 0 1016 630"><rect x="292" y="372.6" width="0.6" height="10.4" fill="#2e2e2e"/><rect x="297.4" y="372.4" width="58.2" height="10.6" fill="#1b1b1b" rx="1.5"/></svg>
<span id="t58" class="t" style="left:300.9px;top:372.7px;font-size:7.4px;line-height:12px;color:#c8c8c8;font-weight:500;letter-spacing:0.01px;">フル画質</span>
<svg style="left:347.7px;top:376.1px;" width="5.4" height="3.4" viewBox="0 0 5.4 3.4"><path d="M0.4 0.4 L2.7 2.8 L5 0.4" stroke="#b0b0b0" stroke-width="0.9" fill="none"/></svg>
<svg style="left:0;top:0;" width="1016" height="630" viewBox="0 0 1016 630"><rect x="364.6" y="371.6" width="13.8" height="12" fill="#171717" rx="1.5"/></svg>
<svg style="left:366.4px;top:373.4px;" width="9.6" height="8" viewBox="0 0 9.6 8.8"><rect x="0.5" y="0.5" width="8.6" height="6" fill="none" stroke="#c4c4c4" stroke-width="0.9"/><path d="M5.2 1.6 L3.6 3.8 H5 L4.2 5.6 L6.2 3.2 H4.8 Z" fill="#c4c4c4"/><path d="M7 7.4 H9.4 L8.2 8.6 Z" fill="#c4c4c4"/></svg>
<svg style="left:381.6px;top:373.7px;" width="9.6" height="7.4" viewBox="0 0 9.6 7.4"><rect x="0.5" y="0.5" width="8.6" height="6.4" fill="none" stroke="#c4c4c4" stroke-width="0.9"/><path d="M1.6 1.6 H8 V5.8 H1.6 Z" fill="#666" /><path d="M1.6 1.6 L8 5.8 M8 1.6 L1.6 5.8" stroke="#c4c4c4" stroke-width="0.5"/></svg>
<svg style="left:396.4px;top:373.4px;" width="10" height="8" viewBox="0 0 10 8"><path d="M2.4 1.4 H8.6 V6.6 H1 Z" fill="none" stroke="#c4c4c4" stroke-width="0.9"/><path d="M0.2 6.6 H1.8 M8.6 0.2 V1.8 M8.6 6.2 V7.8 M9.4 1.4 H7.8" stroke="#c4c4c4" stroke-width="0.8"/></svg>
<svg style="left:411.4px;top:373.7px;" width="9.6" height="7.4" viewBox="0 0 9.6 7.4"><rect x="0.5" y="0.5" width="8.6" height="6.4" fill="none" stroke="#c4c4c4" stroke-width="0.9"/><rect x="2.2" y="2" width="5.2" height="3.4" fill="#c4c4c4"/></svg>
<svg style="left:426px;top:373.3px;" width="10" height="8.6" viewBox="0 0 10 8.6"><rect x="0.5" y="0.5" width="8.6" height="5.6" fill="none" stroke="#c4c4c4" stroke-width="0.9"/><path d="M4.8 0.5 V6.1 M0.5 3.3 H9.1" stroke="#c4c4c4" stroke-width="0.7"/><path d="M6.6 7 H9.6 L8.1 8.6 Z" fill="#c4c4c4"/></svg>
<svg style="left:447.9px;top:372.3px;" width="9" height="9" viewBox="0 0 9 9"><circle cx="4.5" cy="2.8" r="2.3" fill="#e2352e"/><circle cx="2.7" cy="5.8" r="2.3" fill="#2e7fe2"/><circle cx="6.3" cy="5.8" r="2.3" fill="#2fb84a"/><path d="M6.8 8 H9 L7.9 9 Z" fill="#c0c0c0"/></svg>
<svg style="left:463.7px;top:372.9px;" width="8.6" height="8.6" viewBox="0 0 8.6 8.6"><circle cx="4.3" cy="4.3" r="3.3" fill="none" stroke="#d0d0d0" stroke-width="1.6"/><path d="M4.3 1 L6 4.3 M7.4 3 L4.6 5.6 M6.6 6.8 L3.4 5.6 M2 6.4 L3.4 3" stroke="#252525" stroke-width="0.7"/></svg>
<span id="t59" class="t" style="left:476.92px;top:372.3px;font-size:7px;line-height:12px;color:#3b8ee6;letter-spacing:0.04px;">+0.0</span>
<svg style="left:508.4px;top:373.6px;" width="10" height="7.6" viewBox="0 0 10 7.6"><path d="M0.4 1.6 H2.8 L3.6 0.4 H6.4 L7.2 1.6 H9.6 V7.2 H0.4 Z" fill="#c4c4c4"/><circle cx="5" cy="4.2" r="1.9" fill="#252525"/><circle cx="5" cy="4.2" r="1" fill="#c4c4c4"/></svg>
<svg style="left:523.9px;top:373.5px;" width="9" height="7" viewBox="0 0 9 7"><path d="M1 5.6 L5 1.6 A1.6 1.6 0 0 1 7.6 3.6 L4 6.4" stroke="#3a3a3a" stroke-width="1.3" fill="none"/></svg>
<svg style="left:0;top:0;" width="1016" height="630" viewBox="0 0 1016 630"><rect x="538" y="372.6" width="0.6" height="10.4" fill="#2e2e2e"/><rect x="544" y="372.2" width="46" height="11" fill="#1b1b1b" rx="1.5"/></svg>
<span id="t60" class="t" style="left:550.73px;top:372.3px;font-size:6.8px;line-height:12px;color:#c0c0c0;letter-spacing:-0.02px;">0;00;00;18</span>
<svg style="left:0;top:0;" width="1016" height="630" viewBox="0 0 1016 630"><rect x="594" y="372.6" width="0.6" height="10.4" fill="#2e2e2e"/><rect x="844.4" y="44.2" width="171.6" height="244.2" fill="#262626"/><rect x="844.4" y="290.6" width="171.6" height="339.4" fill="#262626"/></svg>
<span id="t61" class="t" style="left:852.6px;top:47.8px;font-size:7.6px;line-height:12px;color:#d2d2d2;font-weight:500;letter-spacing:-0.39px;">ペイント</span>
<svg style="left:888.75px;top:51px;" width="6.5" height="6" viewBox="0 0 6.5 6"><path d="M0 0.6 H6.5 M0 3 H6.5 M0 5.4 H6.5" stroke="#b0b0b0" stroke-width="0.9"/></svg>
<svg style="left:0;top:0;" width="1016" height="630" viewBox="0 0 1016 630"><rect x="851.9" y="60.4" width="42.9" height="1.4" fill="#b4b4b4"/></svg>
<span id="t62" class="t" style="left:910.7px;top:47.8px;font-size:7.6px;line-height:12px;color:#a0a0a0;letter-spacing:-0.44px;">プレビュー</span>
<svg style="left:989.3px;top:50.8px;" width="7.4" height="6" viewBox="0 0 7.4 6"><path d="M0.6 0.5 L3.2 3 L0.6 5.5 M4 0.5 L6.6 3 L4 5.5" fill="none" stroke="#d0d0d0" stroke-width="1.1"/></svg>
<span id="t63" class="t" style="left:856.41px;top:69.8px;font-size:7.2px;line-height:12px;color:#4c4c4c;letter-spacing:0.23px;">不透明度 : 0 %</span>
<span id="t64" class="t" style="left:872.01px;top:81.6px;font-size:7.2px;line-height:12px;color:#4c4c4c;letter-spacing:0.12px;">流量 : 0 %</span>
<svg style="left:923.3px;top:73.6px;" width="7" height="4" viewBox="0 0 7 4"><ellipse cx="3.5" cy="2" rx="3.3" ry="1.3" fill="#5a5a5a" transform="rotate(18 3.5 2)"/></svg>
<span id="t65" class="t" style="left:926.8px;top:78.9px;font-size:5.8px;line-height:12px;color:#4c4c4c;transform:translateX(-50%);">59</span>
<svg style="left:0;top:0;" width="1016" height="630" viewBox="0 0 1016 630"><rect x="962.2" y="79.8" width="16.3" height="16.3" fill="#ffffff"/></svg>
<div style="left:952px;top:69.9px;width:18.3px;height:17.2px;background:#ff0000;box-sizing:border-box;border:0.8px solid #e9a0a0;"></div>
<svg style="left:973.9px;top:70.6px;" width="6" height="6" viewBox="0 0 6 6"><path d="M0.6 1.4 H3.6 A1.8 1.8 0 0 1 5.2 3.2 V5.4" stroke="#5a5a5a" stroke-width="0.9" fill="none"/><path d="M1.8 0 L0 1.4 L1.8 2.8 Z M3.8 4.2 L5.2 6 L6.4 4.2 Z" fill="#5a5a5a"/></svg>
<svg style="left:0;top:0;" width="1016" height="630" viewBox="0 0 1016 630"><rect x="955.4" y="92" width="3.8" height="3.8" fill="#d8d8d8"/></svg>
<div style="left:953.4px;top:90px;width:4px;height:4px;background:#0a0a0a;box-sizing:border-box;border:0.6px solid #9a9a9a;"></div>
<span id="t66" class="t" style="left:864px;top:98.8px;font-size:7.4px;line-height:12px;color:#4c4c4c;letter-spacing:0px;">モード :</span>
<span id="t67" class="t" style="left:896.42px;top:99px;font-size:7px;line-height:12px;color:#4c4c4c;letter-spacing:0.36px;">通常</span>
<svg style="left:961.7px;top:103.3px;" width="5.4" height="3.4" viewBox="0 0 5.4 3.4"><path d="M0.4 0.4 L2.7 2.8 L5 0.4" stroke="#444444" stroke-width="0.9" fill="none"/></svg>
<svg style="left:973.1px;top:99.4px;" width="9" height="10" viewBox="0 0 9 10"><path d="M1 9.4 L1.6 7.4 L6 3 L7.2 4.2 L2.8 8.6 Z" fill="none" stroke="#444" stroke-width="0.8"/><path d="M5.6 2.6 L7.8 0.6 L8.8 1.6 L7 4 Z" fill="#444"/></svg>
<span id="t68" class="t" style="left:849.7px;top:115px;font-size:7.4px;line-height:12px;color:#4c4c4c;letter-spacing:-0.08px;">チャンネル :</span>
<span id="t69" class="t" style="left:896.46px;top:114.7px;font-size:6px;line-height:12px;color:#4c4c4c;letter-spacing:-0.21px;">RGBA</span>
<svg style="left:961.7px;top:119.5px;" width="5.4" height="3.4" viewBox="0 0 5.4 3.4"><path d="M0.4 0.4 L2.7 2.8 L5 0.4" stroke="#444444" stroke-width="0.9" fill="none"/></svg>
<span id="t70" class="t" style="left:872px;top:130.8px;font-size:7.4px;line-height:12px;color:#4c4c4c;letter-spacing:-0.2px;">種類 :</span>
<span id="t71" class="t" style="left:896.42px;top:131px;font-size:7px;line-height:12px;color:#4c4c4c;letter-spacing:0.36px;">一定</span>
<svg style="left:961.7px;top:135.3px;" width="5.4" height="3.4" viewBox="0 0 5.4 3.4"><path d="M0.4 0.4 L2.7 2.8 L5 0.4" stroke="#444444" stroke-width="0.9" fill="none"/></svg>
<span id="t72" class="t" style="left:972.74px;top:130.5px;font-size:6.6px;line-height:12px;color:#4c4c4c;letter-spacing:1.34px;">1 f</span>
<span id="t73" class="t" style="left:872px;top:146.1px;font-size:7.4px;line-height:12px;color:#4c4c4c;letter-spacing:-0.2px;">消去 :</span>
<span id="t74" class="t" style="left:896.4px;top:146.4px;font-size:7.4px;line-height:12px;color:#4c4c4c;letter-spacing:0.05px;">レイヤーソースとペ..</span>
<svg style="left:979.3px;top:150.7px;" width="5.4" height="3.4" viewBox="0 0 5.4 3.4"><path d="M0.4 0.4 L2.7 2.8 L5 0.4" stroke="#444444" stroke-width="0.9" fill="none"/></svg>
<span id="t75" class="t" style="left:848.2px;top:160.8px;font-size:7.4px;line-height:12px;color:#4c4c4c;letter-spacing:-0.12px;">コピーオプション</span>
<svg style="left:0;top:0;" width="1016" height="630" viewBox="0 0 1016 630"><rect x="908.5" y="166.4" width="79.5" height="0.6" fill="#2e2e2e"/></svg>
<span id="t76" class="t" style="left:849.3px;top:176.8px;font-size:7.4px;line-height:12px;color:#4c4c4c;letter-spacing:-0.01px;">プリセット :</span>
<svg style="left:0;top:0;" width="1016" height="630" viewBox="0 0 1016 630"><rect x="896.8" y="175.6" width="12.2" height="14" fill="#212a38" rx="1.5"/></svg>
<svg style="left:896.6px;top:176.85px;" width="12" height="11.5" viewBox="0 0 12 11.5"><circle cx="6" cy="3.2" r="1.9" fill="#2d5a94"/><path d="M5.2 4.6 H6.8 L7.1 7.4 H10.2 V9.2 H1.8 V7.4 H4.9 Z M1.8 9.9 H10.2 V10.9 H1.8 Z" fill="#2d5a94"/></svg>
<svg style="left:916px;top:176.85px;" width="12" height="11.5" viewBox="0 0 12 11.5"><circle cx="6" cy="3.2" r="1.9" fill="#3c3c3c"/><path d="M5.2 4.6 H6.8 L7.1 7.4 H10.2 V9.2 H1.8 V7.4 H4.9 Z M1.8 9.9 H10.2 V10.9 H1.8 Z" fill="#3c3c3c"/><path d="M0.4 0.6 H3.6 M0.4 0.6 V4.4" stroke="#3c3c3c" stroke-width="0.7" stroke-dasharray="0.9 0.7" fill="none"/></svg>
<svg style="left:934.5px;top:176.85px;" width="12" height="11.5" viewBox="0 0 12 11.5"><circle cx="6" cy="3.2" r="1.9" fill="#3c3c3c"/><path d="M5.2 4.6 H6.8 L7.1 7.4 H10.2 V9.2 H1.8 V7.4 H4.9 Z M1.8 9.9 H10.2 V10.9 H1.8 Z" fill="#3c3c3c"/><path d="M0.4 0.6 H3.6 M0.4 0.6 V4.4" stroke="#3c3c3c" stroke-width="0.7" stroke-dasharray="0.9 0.7" fill="none"/></svg>
<svg style="left:953.2px;top:176.85px;" width="12" height="11.5" viewBox="0 0 12 11.5"><circle cx="6" cy="3.2" r="1.9" fill="#3c3c3c"/><path d="M5.2 4.6 H6.8 L7.1 7.4 H10.2 V9.2 H1.8 V7.4 H4.9 Z M1.8 9.9 H10.2 V10.9 H1.8 Z" fill="#3c3c3c"/><path d="M0.4 0.6 H3.6 M0.4 0.6 V4.4" stroke="#3c3c3c" stroke-width="0.7" stroke-dasharray="0.9 0.7" fill="none"/></svg>
<svg style="left:971.7px;top:176.85px;" width="12" height="11.5" viewBox="0 0 12 11.5"><circle cx="6" cy="3.2" r="1.9" fill="#3c3c3c"/><path d="M5.2 4.6 H6.8 L7.1 7.4 H10.2 V9.2 H1.8 V7.4 H4.9 Z M1.8 9.9 H10.2 V10.9 H1.8 Z" fill="#3c3c3c"/><path d="M0.4 0.6 H3.6 M0.4 0.6 V4.4" stroke="#3c3c3c" stroke-width="0.7" stroke-dasharray="0.9 0.7" fill="none"/></svg>
<span id="t77" class="t" style="left:865px;top:196.8px;font-size:7.4px;line-height:12px;color:#4c4c4c;letter-spacing:-0.25px;">ソース :</span>
<span id="t78" class="t" style="left:896.4px;top:197px;font-size:7.4px;line-height:12px;color:#4c4c4c;letter-spacing:0.31px;">現在のレイヤー</span>
<svg style="left:979.8px;top:201.3px;" width="5.4" height="3.4" viewBox="0 0 5.4 3.4"><path d="M0.4 0.4 L2.7 2.8 L5 0.4" stroke="#444444" stroke-width="0.9" fill="none"/></svg>
<svg style="left:0;top:0;" width="1016" height="630" viewBox="0 0 1016 630"><rect x="851" y="213.8" width="8.9" height="8.6" fill="#444444" rx="1"/></svg>
<svg style="left:851.9px;top:215px;" width="7" height="6" viewBox="0 0 7 6"><path d="M0.8 3 L2.8 5 L6.2 0.8" stroke="#252525" stroke-width="1.3" fill="none"/></svg>
<span id="t79" class="t" style="left:862.13px;top:211.8px;font-size:6.8px;line-height:12px;color:#4c4c4c;letter-spacing:0.25px;">調整</span>
<div style="left:885.3px;top:213.8px;width:8.6px;height:8.6px;box-sizing:border-box;border:0.9px solid #484848;border-radius:1px;"></div>
<span id="t80" class="t" style="left:896.4px;top:211.8px;font-size:7.4px;line-height:12px;color:#4c4c4c;letter-spacing:-0px;">ソースフレームの時間固定</span>
<span id="t81" class="t" style="left:873.2px;top:226.9px;font-size:7.4px;line-height:12px;color:#4c4c4c;letter-spacing:0.01px;">オフセット : 0 ,</span>
<span id="t82" class="t" style="left:949.7px;top:226.4px;font-size:6.8px;line-height:12px;color:#4c4c4c;transform:translateX(-50%);">0</span>
<svg style="left:975.6px;top:228.6px;" width="8" height="8" viewBox="0 0 8 8"><path d="M1.6 3.4 A3 3 0 1 1 1.4 5.6" stroke="#444" stroke-width="0.9" fill="none"/><path d="M0 2 L3.2 2.4 L1.2 5 Z" fill="#444"/><path d="M2 7.6 H7.4" stroke="#444" stroke-width="0.8"/></svg>
<span id="t83" class="t" style="left:851px;top:240.2px;font-size:7.4px;line-height:12px;color:#4c4c4c;letter-spacing:0.15px;">ソース時間シフト : 0 f</span>
<svg style="left:0;top:0;" width="1016" height="630" viewBox="0 0 1016 630"><rect x="851" y="254.9" width="131" height="0.6" fill="#2e2e2e"/></svg>
<div style="left:851.9px;top:261px;width:8.8px;height:8.8px;box-sizing:border-box;border:0.9px solid #484848;border-radius:1px;"></div>
<span id="t84" class="t" style="left:864px;top:259.2px;font-size:7.4px;line-height:12px;color:#4c4c4c;letter-spacing:-0.31px;">コピーソースオーバーレイ :</span>
<span id="t85" class="t" style="left:955.25px;top:258.9px;font-size:6.2px;line-height:12px;color:#4c4c4c;letter-spacing:0.63px;">50 %</span>
<svg style="left:976.6px;top:261px;" width="8" height="8" viewBox="0 0 8 8"><circle cx="3.2" cy="3.2" r="2.8" fill="#444"/><circle cx="4.8" cy="4.8" r="2.8" fill="#3a3a3a" stroke="#252525" stroke-width="0.6"/></svg>
<span id="t86" class="t" style="left:852.6px;top:294.4px;font-size:7.4px;line-height:12px;color:#cfcfcf;font-weight:700;letter-spacing:0.1px;">整列</span>
<svg style="left:873.75px;top:297.6px;" width="6.5" height="6" viewBox="0 0 6.5 6"><path d="M0 0.6 H6.5 M0 3 H6.5 M0 5.4 H6.5" stroke="#b0b0b0" stroke-width="0.9"/></svg>
<span id="t87" class="t" style="left:848.7px;top:312.1px;font-size:7.4px;line-height:12px;color:#b2b2b2;letter-spacing:0.01px;">レイヤーを整列 :</span>
<span id="t88" class="t" style="left:913.01px;top:312.2px;font-size:7.2px;line-height:12px;color:#454545;letter-spacing:0.3px;">選択範囲</span>
<svg style="left:975px;top:316.5px;" width="5.4" height="3.4" viewBox="0 0 5.4 3.4"><path d="M0.4 0.4 L2.7 2.8 L5 0.4" stroke="#444444" stroke-width="0.9" fill="none"/></svg>
<span id="t89" class="t" style="left:848.7px;top:345.1px;font-size:7.4px;line-height:12px;color:#b2b2b2;letter-spacing:0.01px;">レイヤーを配置 :</span>
<svg style="left:852.1px;top:329.3px;" width="11" height="10" viewBox="0 0 11 10"><rect x="1" y="1" width="6" height="3" fill="#373737"/><rect x="1" y="5.6" width="9" height="3.2" fill="#373737"/><path d="M0.4 0 V10" stroke="#373737" stroke-width="0.8"/></svg>
<svg style="left:875.5px;top:329.3px;" width="11" height="10" viewBox="0 0 11 10"><rect x="3" y="1" width="5" height="3" fill="#373737"/><rect x="1" y="5.6" width="9" height="3.2" fill="#373737"/><path d="M5.5 0 V10" stroke="#373737" stroke-width="0.8"/></svg>
<svg style="left:899.2px;top:329.3px;" width="11" height="10" viewBox="0 0 11 10"><rect x="4" y="1" width="6" height="3" fill="#373737"/><rect x="1" y="5.6" width="9" height="3.2" fill="#373737"/><path d="M10.6 0 V10" stroke="#373737" stroke-width="0.8"/></svg>
<svg style="left:922.3px;top:329.3px;" width="11" height="10" viewBox="0 0 11 10"><rect x="1" y="1" width="3" height="8" fill="#373737"/><rect x="5.6" y="1" width="3.2" height="5" fill="#373737"/><path d="M0 0.6 H10" stroke="#373737" stroke-width="0.8"/></svg>
<svg style="left:945.5px;top:329.3px;" width="11" height="10" viewBox="0 0 11 10"><rect x="1.6" y="1" width="3" height="8" fill="#373737"/><rect x="6.2" y="2.4" width="3.2" height="5.2" fill="#373737"/><path d="M0 5 H11" stroke="#373737" stroke-width="0.8"/></svg>
<svg style="left:968.8px;top:329.3px;" width="11" height="10" viewBox="0 0 11 10"><rect x="1" y="1" width="3" height="8" fill="#373737"/><rect x="5.6" y="4" width="3.2" height="5" fill="#373737"/><path d="M0 9.6 H10" stroke="#373737" stroke-width="0.8"/></svg>
<svg style="left:852.1px;top:358.4px;" width="11" height="11" viewBox="0 0 11 11"><path d="M0 0.5 H11" stroke="#373737" stroke-width="0.8"/><rect x="2" y="1.4" width="7" height="3" fill="#373737"/><path d="M0 6 H11" stroke="#373737" stroke-width="0.8"/><rect x="1" y="6.8" width="9" height="3" fill="#373737"/></svg>
<svg style="left:875.5px;top:358.4px;" width="11" height="11" viewBox="0 0 11 11"><path d="M0 2.6 H11 M0 7.6 H11" stroke="#373737" stroke-width="0.8"/><rect x="2.4" y="1" width="6" height="3.2" fill="#373737"/><rect x="1" y="6" width="9" height="3.2" fill="#373737"/></svg>
<svg style="left:899.2px;top:358.4px;" width="11" height="11" viewBox="0 0 11 11"><path d="M0 4.6 H11 M0 10 H11" stroke="#373737" stroke-width="0.8"/><rect x="2.4" y="1.2" width="6" height="3" fill="#373737"/><rect x="1" y="6.6" width="9" height="3" fill="#373737"/></svg>
<svg style="left:922.3px;top:358.4px;" width="11" height="11" viewBox="0 0 11 11"><path d="M0.5 0 V11 M6 0 V11" stroke="#373737" stroke-width="0.8"/><rect x="1.4" y="2" width="3" height="7" fill="#373737"/><rect x="6.8" y="3" width="3" height="5" fill="#373737"/></svg>
<svg style="left:945.5px;top:358.4px;" width="11" height="11" viewBox="0 0 11 11"><path d="M2.8 0 V11 M8 0 V11" stroke="#373737" stroke-width="0.8"/><rect x="1.2" y="2" width="3.2" height="7" fill="#373737"/><rect x="6.6" y="3" width="3" height="5" fill="#373737"/></svg>
<svg style="left:968.8px;top:358.4px;" width="11" height="11" viewBox="0 0 11 11"><path d="M4.8 0 V11 M10 0 V11" stroke="#373737" stroke-width="0.8"/><rect x="1.4" y="2" width="3" height="7" fill="#373737"/><rect x="6.6" y="3" width="3" height="5" fill="#373737"/></svg>
<svg style="left:0;top:0;" width="1016" height="630" viewBox="0 0 1016 630"><rect x="0" y="387.6" width="841.9" height="242.4" fill="#262626"/></svg>
<span id="t90" class="t" style="left:25.7px;top:391.9px;font-size:8px;line-height:12px;color:#8a8a8a;transform:translateX(-50%);">×</span>
<svg style="left:0;top:0;" width="1016" height="630" viewBox="0 0 1016 630"><rect x="34.1" y="393.3" width="6.9" height="6.7" fill="#b9a57e"/></svg>
<span id="t91" class="t" style="left:48.5px;top:392px;font-size:7.5px;line-height:12px;color:#cecece;letter-spacing:-0.2px;-webkit-text-stroke:0.2px #cecece;">icon_animation</span>
<svg style="left:103.25px;top:394.8px;" width="6.5" height="6" viewBox="0 0 6.5 6"><path d="M0 0.6 H6.5 M0 3 H6.5 M0 5.4 H6.5" stroke="#b0b0b0" stroke-width="0.9"/></svg>
<svg style="left:0;top:0;" width="1016" height="630" viewBox="0 0 1016 630"><rect x="24.1" y="404.2" width="85.4" height="1.6" fill="#b4b4b4"/></svg>
<span id="t92" class="t" style="left:135.1px;top:392.6px;font-size:7.6px;line-height:12px;color:#9a9a9a;letter-spacing:-0.42px;">レンダーキュー</span>
<span id="t93" class="t" style="left:33.71px;top:410px;font-size:9.8px;line-height:12px;color:#3f97ee;font-weight:700;letter-spacing:0.25px;">0;00;00;18</span>
<span id="t94" class="t" style="left:23.79px;top:419.2px;font-size:7.8px;line-height:12px;color:#2566a8;letter-spacing:0.52px;">00018 (29.97 fps)</span>
<svg style="left:0;top:0;" width="1016" height="630" viewBox="0 0 1016 630"><rect x="101.6" y="412.4" width="206.4" height="11.9" fill="#141414" rx="1.5"/></svg>
<svg style="left:105.2px;top:414.6px;" width="10" height="8" viewBox="0 0 10 8"><circle cx="4.6" cy="3.2" r="2.4" fill="none" stroke="#b8b8b8" stroke-width="0.9"/><path d="M2.8 5 L0.6 7.2" stroke="#b8b8b8" stroke-width="1.1"/><path d="M7.4 5.6 H9.8 L8.6 7 Z" fill="#b8b8b8"/></svg>
<svg style="left:319.9px;top:414.7px;" width="11" height="8" viewBox="0 0 11 8"><path d="M0 1.6 H4 M4 1.6 L6.4 4 H8 M4 1.6 H8 M6.4 4 V6.6 H8" stroke="#c4c4c4" stroke-width="0.9" fill="none"/><rect x="8" y="0.6" width="2.4" height="2" fill="#c4c4c4"/><rect x="8" y="3.2" width="2.4" height="2" fill="#c4c4c4"/><rect x="8" y="5.8" width="2.4" height="2" fill="#c4c4c4"/><path d="M0 0.4 L2 1.6 L0 2.8 Z" fill="#c4c4c4"/></svg>
<svg style="left:342.57px;top:413.7px;" width="11.25" height="10" viewBox="0 0 9 8"><path d="M0.6 4 A3.9 3.6 0 0 1 8.4 4 Z" fill="#c4c4c4"/><path d="M4.5 0.6 V3.8 M1.4 3.4 H7.6" stroke="#262626" stroke-width="0.7"/><path d="M4.5 4 V7.6 M2 5.4 V7 M7 5.4 V7 M1 7.4 H8 M1.2 5.4 H7.8" stroke="#c4c4c4" stroke-width="0.8" fill="none"/></svg>
<svg style="left:361.3px;top:414.2px;" width="9.4" height="9" viewBox="0 0 9.4 9"><rect x="2.6" y="0.4" width="6.4" height="6.4" fill="#c4c4c4"/><path d="M4.2 3.6 H7.4" stroke="#262626" stroke-width="0.9"/><path d="M1.6 2 V8 H7.4" stroke="#c4c4c4" stroke-width="0.9" fill="none"/><path d="M0.4 3.4 V9 H6" stroke="#c4c4c4" stroke-width="0.7" fill="none"/></svg>
<svg style="left:377.7px;top:413.9px;" width="12" height="9.6" viewBox="0 0 10 8"><g transform="rotate(-32 5 4)"><rect x="0.6" y="1.6" width="8.8" height="4.8" rx="2.4" fill="#c4c4c4"/><path d="M3 1.8 V6.2 M4.6 1.8 V6.2 M6.2 1.8 V6.2" stroke="#262626" stroke-width="0.45"/></g></svg>
<svg style="left:401.9px;top:413.5px;" width="10.4" height="10.4" viewBox="0 0 10.4 10.4"><rect x="0.9" y="1.6" width="8.6" height="7.9" rx="0.8" fill="none" stroke="#c4c4c4" stroke-width="0.9"/><path d="M3 0.2 V2 M7.4 0.2 V2" stroke="#c4c4c4" stroke-width="0.9"/><path d="M2.8 3.8 L7.6 8 M2.8 3.8 V5.6 M2.8 3.8 H4.6" stroke="#c4c4c4" stroke-width="0.8" fill="none"/></svg>
<svg style="left:20.3px;top:435.6px;" width="8.4" height="5.4" viewBox="0 0 8.4 5.4"><path d="M0.2 2.7 C2 -0.2 6.4 -0.2 8.2 2.7 C6.4 5.6 2 5.6 0.2 2.7 Z" fill="#c4c4c4"/><circle cx="4.2" cy="2.7" r="1.55" fill="#262626"/></svg>
<svg style="left:30.8px;top:434.3px;" width="8" height="8" viewBox="0 0 8 8"><path d="M0.4 2.6 H2 L4.2 0.6 V7.4 L2 5.4 H0.4 Z" fill="#c4c4c4"/><path d="M5.4 1.6 A3 3 0 0 1 5.4 6.4 M6.4 0.4 A4.4 4.4 0 0 1 6.4 7.6" stroke="#c4c4c4" stroke-width="0.8" fill="none"/></svg>
<div style="left:42.8px;top:436.3px;width:4px;height:4px;background:#c4c4c4;border-radius:50%;"></div>
<svg style="left:51.8px;top:434px;" width="6.4" height="8" viewBox="0 0 6.4 8"><path d="M1.6 3.6 V2.4 A1.6 1.6 0 0 1 4.8 2.4 V3.6" fill="none" stroke="#c4c4c4" stroke-width="1"/><rect x="0.3" y="3.5" width="5.8" height="4.3" rx="0.5" fill="#c4c4c4"/><rect x="2.8" y="4.8" width="0.9" height="1.6" fill="#262626"/></svg>
<svg style="left:0;top:0;" width="1016" height="630" viewBox="0 0 1016 630"><rect x="62.6" y="432.6" width="0.7" height="11.4" fill="#333333"/></svg>
<svg style="left:72.3px;top:434px;" width="8.6" height="8.6" viewBox="0 0 8.6 8.6"><path d="M0.6 0.6 H4.4 L8.2 4.6 L4.6 8.2 L0.6 4.2 Z" fill="#c4c4c4"/><circle cx="2.3" cy="2.3" r="0.8" fill="#262626"/></svg>
<span id="t95" class="t" style="left:90.8px;top:432.6px;font-size:6.6px;line-height:12px;color:#8f8f8f;transform:translateX(-50%);font-style:italic;">#</span>
<svg style="left:0;top:0;" width="1016" height="630" viewBox="0 0 1016 630"><rect x="105.8" y="432.6" width="0.7" height="11.4" fill="#333333"/></svg>
<span id="t96" class="t" style="left:111.68px;top:433.1px;font-size:8px;line-height:12px;color:#8f8f8f;letter-spacing:-0.39px;">ソース名</span>
<svg style="left:0;top:0;" width="1016" height="630" viewBox="0 0 1016 630"><rect x="238.6" y="432.6" width="0.7" height="11.4" fill="#333333"/></svg>
<svg style="left:241.2px;top:434.3px;" width="9" height="8" viewBox="0 0 9 8"><path d="M0.6 4 A3.9 3.6 0 0 1 8.4 4 Z" fill="#c4c4c4"/><path d="M4.5 0.6 V3.8 M1.4 3.4 H7.6" stroke="#262626" stroke-width="0.7"/><path d="M4.5 4 V7.6 M2 5.4 V7 M7 5.4 V7 M1 7.4 H8 M1.2 5.4 H7.8" stroke="#c4c4c4" stroke-width="0.8" fill="none"/></svg>
<svg style="left:252.7px;top:434.8px;" width="7" height="7" viewBox="0 0 7 7"><circle cx="3.5" cy="3.5" r="1.7" fill="none" stroke="#c4c4c4" stroke-width="0.9"/><path d="M3.5 0 V1.6 M3.5 5.4 V7 M0 3.5 H1.6 M5.4 3.5 H7" stroke="#c4c4c4" stroke-width="0.9"/></svg>
<svg style="left:262.4px;top:434.6px;" width="7" height="7.4" viewBox="0 0 7 7.4"><path d="M0.6 0.6 L6.4 6.8" stroke="#c4c4c4" stroke-width="0.9"/></svg>
<span id="t97" class="t" style="left:276.8px;top:432.2px;font-size:9.4px;line-height:12px;color:#c4c4c4;transform:translateX(-50%);letter-spacing:-0.3px;"><i>fx</i></span>
<svg style="left:282.9px;top:434.6px;" width="8" height="7.4" viewBox="0 0 8 7.4"><rect x="0.4" y="0.4" width="7.2" height="6.6" fill="#c4c4c4"/><rect x="1.4" y="1.4" width="1" height="4.6" fill="#262626"/><path d="M3.4 3.7 H6.6" stroke="#262626" stroke-width="1"/></svg>
<svg style="left:292.55px;top:434.5px;" width="9.5" height="7.6" viewBox="0 0 10 8"><g transform="rotate(-32 5 4)"><rect x="0.6" y="1.6" width="8.8" height="4.8" rx="2.4" fill="#c4c4c4"/><path d="M3 1.8 V6.2 M4.6 1.8 V6.2 M6.2 1.8 V6.2" stroke="#262626" stroke-width="0.45"/></g></svg>
<svg style="left:304.3px;top:434.6px;" width="7.4" height="7.4" viewBox="0 0 7.4 7.4"><circle cx="3.7" cy="3.7" r="3.2" fill="none" stroke="#c4c4c4" stroke-width="0.9"/><path d="M1.4 6 A3.2 3.2 0 0 1 6 1.4 Z" fill="#c4c4c4"/></svg>
<svg style="left:314.5px;top:434.3px;" width="7.6" height="8" viewBox="0 0 7.6 8"><path d="M3.8 0.5 L7.1 2.2 V5.8 L3.8 7.5 L0.5 5.8 V2.2 Z M0.5 2.2 L3.8 3.9 L7.1 2.2 M3.8 3.9 V7.5" fill="none" stroke="#c4c4c4" stroke-width="0.8"/></svg>
<svg style="left:0;top:0;" width="1016" height="630" viewBox="0 0 1016 630"><rect x="332" y="432.6" width="0.7" height="11.4" fill="#333333"/></svg>
<span id="t98" class="t" style="left:336.68px;top:433.1px;font-size:8px;line-height:12px;color:#8f8f8f;letter-spacing:-0.01px;">親とリンク</span>
<svg style="left:0;top:0;" width="1016" height="630" viewBox="0 0 1016 630"><rect x="411.6" y="432.6" width="0.7" height="11.4" fill="#333333"/><rect x="0" y="444.65" width="423.2" height="12.2" fill="#303030"/><rect x="20" y="444.65" width="8.6" height="12.2" fill="#262626"/></svg>
<svg style="left:20.3px;top:448.05px;" width="8.4" height="5.4" viewBox="0 0 8.4 5.4"><path d="M0.2 2.7 C2 -0.2 6.4 -0.2 8.2 2.7 C6.4 5.6 2 5.6 0.2 2.7 Z" fill="#d8d8d8"/><circle cx="4.2" cy="2.7" r="1.55" fill="#262626"/></svg>
<svg style="left:0;top:0;" width="1016" height="630" viewBox="0 0 1016 630"><rect x="40.4" y="446.35" width="8.4" height="8.8" fill="#1f1f1f"/><rect x="50.8" y="446.35" width="8.4" height="8.8" fill="#1f1f1f"/></svg>
<svg style="left:66.7px;top:449.25px;" width="5.4" height="3.6" viewBox="0 0 5.4 3.6"><path d="M0.5 0.5 L2.7 2.9 L4.9 0.5" stroke="#b4b4b4" stroke-width="1.1" fill="none"/></svg>
<svg style="left:0;top:0;" width="1016" height="630" viewBox="0 0 1016 630"><rect x="75" y="445.95" width="10" height="9.6" fill="#d03c3b"/></svg>
<span id="t99" class="t" style="left:91.8px;top:445.45px;font-size:8.4px;line-height:12px;color:#b6b6b6;transform:translateX(-50%);">1</span>
<svg style="left:0;top:0;" width="1016" height="630" viewBox="0 0 1016 630"><rect x="110" y="445.95" width="9.9" height="9.6" fill="#ffffff"/></svg>
<span id="t100" class="t" style="left:123.61px;top:445.75px;font-size:7.3px;line-height:12px;color:#b6b6b6;letter-spacing:-0.17px;">ヌル 1</span>
<svg style="left:241.74px;top:447.23px;" width="7.92" height="7.04" viewBox="0 0 9 8"><path d="M0.6 4 A3.9 3.6 0 0 1 8.4 4 Z" fill="#cfcfcf"/><path d="M4.5 0.6 V3.8 M1.4 3.4 H7.6" stroke="#262626" stroke-width="0.7"/><path d="M4.5 4 V7.6 M2 5.4 V7 M7 5.4 V7 M1 7.4 H8 M1.2 5.4 H7.8" stroke="#cfcfcf" stroke-width="0.8" fill="none"/></svg>
<svg style="left:0;top:0;" width="1016" height="630" viewBox="0 0 1016 630"><rect x="252.4" y="446.35" width="8" height="8.8" fill="#222222"/></svg>
<svg style="left:262.9px;top:447.05px;" width="8" height="7.4" viewBox="0 0 8 7.4"><path d="M0.6 6.9 L7.4 0.5" stroke="#d4d4d4" stroke-width="1.25"/></svg>
<svg style="left:0;top:0;" width="1016" height="630" viewBox="0 0 1016 630"><rect x="293" y="446.35" width="8.4" height="8.8" fill="#222222"/><rect x="303.3" y="446.35" width="8.4" height="8.8" fill="#222222"/><rect x="313.6" y="446.35" width="8.4" height="8.8" fill="#222222"/></svg>
<svg style="left:335.4px;top:445.95px;" width="9.6" height="9.6" viewBox="0 0 8.4 8.4"><path d="M4.48 4.41 L4.48 4.52 L4.43 4.63 L4.35 4.74 L4.22 4.83 L4.07 4.88 L3.89 4.90 L3.70 4.87 L3.51 4.78 L3.34 4.65 L3.19 4.46 L3.09 4.23 L3.05 3.96 L3.07 3.68 L3.16 3.40 L3.32 3.13 L3.55 2.90 L3.84 2.72 L4.18 2.61 L4.55 2.58 L4.94 2.63 L5.31 2.79 L5.65 3.03 L5.94 3.35 L6.15 3.75 L6.28 4.20 L6.29 4.68 L6.19 5.17 L5.98 5.63 L5.65 6.05 L5.23 6.39 L4.73 6.63 L4.17 6.76 L3.58 6.75 L2.99 6.61 L2.44 6.33 L1.95 5.92 L1.56 5.40 L1.29 4.79 L1.16 4.12 L1.19 3.43 L1.38 2.74 L1.72 2.10 L2.22 1.54 L2.84 1.10 L3.55 0.81 L4.33 0.68 L5.14 0.73 L5.92 0.97 L6.65 1.39 L7.27 1.97" fill="none" stroke="#b4b4b4" stroke-width="0.72" stroke-linejoin="round"/></svg>
<svg style="left:0;top:0;" width="1016" height="630" viewBox="0 0 1016 630"><rect x="349.6" y="446.05" width="59.4" height="9.6" fill="#1b1b1b" rx="1"/></svg>
<span id="t101" class="t" style="left:353.13px;top:445.35px;font-size:6.8px;line-height:12px;color:#c4c4c4;letter-spacing:0.45px;">なし</span>
<svg style="left:400.7px;top:449.25px;" width="5.4" height="3.4" viewBox="0 0 5.4 3.4"><path d="M0.4 0.4 L2.7 2.8 L5 0.4" stroke="#b8b8b8" stroke-width="1" fill="none"/></svg>
<svg style="left:21.9px;top:460.25px;" width="4.6" height="6.4" viewBox="0 0 4.6 6.4"><path d="M4.4 0.2 V6.2 L0.2 3.2 Z" fill="#c8c8c8"/></svg>
<svg style="left:31.5px;top:460.15px;" width="6.6" height="6.6" viewBox="0 0 6.6 6.6"><path d="M3.3 0.5 L6.1 3.3 L3.3 6.1 L0.5 3.3 Z" fill="none" stroke="#9a9a9a" stroke-width="0.9"/><path d="M3.3 2.2 L4.4 3.3 L3.3 4.4 L2.2 3.3 Z" fill="#8a8a8a"/></svg>
<svg style="left:42.7px;top:460.25px;" width="4.6" height="6.4" viewBox="0 0 4.6 6.4"><path d="M0.2 0.2 V6.2 L4.4 3.2 Z" fill="#c8c8c8"/></svg>
<svg style="left:103.9px;top:459.15px;" width="8.2" height="9.2" viewBox="0 0 7.4 8.4"><circle cx="3.7" cy="4.9" r="3" fill="none" stroke="#3a88d8" stroke-width="1"/><path d="M2.4 0.6 H5 M3.7 0.6 V1.8 M3.7 4.9 L5 3.4" stroke="#3a88d8" stroke-width="0.9"/></svg>
<svg style="left:115.6px;top:460.05px;" width="7.6" height="7.4" viewBox="0 0 7.6 7.4"><path d="M0.5 0.4 V6.2 H7.4" stroke="#a8a8a8" stroke-width="0.8" fill="none"/><path d="M1.8 4.6 L3.4 2.4 L4.6 3.6 L6.4 1" stroke="#a8a8a8" stroke-width="0.8" fill="none"/></svg>
<span id="t102" class="t" style="left:129.2px;top:458.05px;font-size:7.4px;line-height:12px;color:#c8c8c8;font-weight:500;letter-spacing:0.29px;">位置</span>
<span id="t103" class="t" style="left:242.75px;top:457.95px;font-size:8.8px;line-height:12px;color:#3a88d8;letter-spacing:0.11px;">250.0,70.7</span>
<svg style="left:344.3px;top:458.95px;" width="9.6" height="9.6" viewBox="0 0 8.4 8.4"><path d="M4.48 4.41 L4.48 4.52 L4.43 4.63 L4.35 4.74 L4.22 4.83 L4.07 4.88 L3.89 4.90 L3.70 4.87 L3.51 4.78 L3.34 4.65 L3.19 4.46 L3.09 4.23 L3.05 3.96 L3.07 3.68 L3.16 3.40 L3.32 3.13 L3.55 2.90 L3.84 2.72 L4.18 2.61 L4.55 2.58 L4.94 2.63 L5.31 2.79 L5.65 3.03 L5.94 3.35 L6.15 3.75 L6.28 4.20 L6.29 4.68 L6.19 5.17 L5.98 5.63 L5.65 6.05 L5.23 6.39 L4.73 6.63 L4.17 6.76 L3.58 6.75 L2.99 6.61 L2.44 6.33 L1.95 5.92 L1.56 5.40 L1.29 4.79 L1.16 4.12 L1.19 3.43 L1.38 2.74 L1.72 2.10 L2.22 1.54 L2.84 1.10 L3.55 0.81 L4.33 0.68 L5.14 0.73 L5.92 0.97 L6.65 1.39 L7.27 1.97" fill="none" stroke="#b4b4b4" stroke-width="0.72" stroke-linejoin="round"/></svg>
<svg style="left:21.9px;top:473.25px;" width="4.6" height="6.4" viewBox="0 0 4.6 6.4"><path d="M4.4 0.2 V6.2 L0.2 3.2 Z" fill="#c8c8c8"/></svg>
<svg style="left:31.5px;top:473.15px;" width="6.6" height="6.6" viewBox="0 0 6.6 6.6"><path d="M3.3 0.5 L6.1 3.3 L3.3 6.1 L0.5 3.3 Z" fill="none" stroke="#9a9a9a" stroke-width="0.9"/><path d="M3.3 2.2 L4.4 3.3 L3.3 4.4 L2.2 3.3 Z" fill="#8a8a8a"/></svg>
<svg style="left:42.7px;top:473.25px;" width="4.6" height="6.4" viewBox="0 0 4.6 6.4"><path d="M0.2 0.2 V6.2 L4.4 3.2 Z" fill="#c8c8c8"/></svg>
<svg style="left:103.9px;top:472.15px;" width="8.2" height="9.2" viewBox="0 0 7.4 8.4"><circle cx="3.7" cy="4.9" r="3" fill="none" stroke="#3a88d8" stroke-width="1"/><path d="M2.4 0.6 H5 M3.7 0.6 V1.8 M3.7 4.9 L5 3.4" stroke="#3a88d8" stroke-width="0.9"/></svg>
<svg style="left:115.6px;top:473.05px;" width="7.6" height="7.4" viewBox="0 0 7.6 7.4"><path d="M0.5 0.4 V6.2 H7.4" stroke="#a8a8a8" stroke-width="0.8" fill="none"/><path d="M1.8 4.6 L3.4 2.4 L4.6 3.6 L6.4 1" stroke="#a8a8a8" stroke-width="0.8" fill="none"/></svg>
<span id="t104" class="t" style="left:129.2px;top:471.05px;font-size:7.4px;line-height:12px;color:#c8c8c8;font-weight:500;letter-spacing:0.29px;">回転</span>
<span id="t105" class="t" style="left:242.75px;top:470.95px;font-size:8.8px;line-height:12px;color:#3a88d8;letter-spacing:0.49px;">0x+2.8°</span>
<svg style="left:344.3px;top:471.95px;" width="9.6" height="9.6" viewBox="0 0 8.4 8.4"><path d="M4.48 4.41 L4.48 4.52 L4.43 4.63 L4.35 4.74 L4.22 4.83 L4.07 4.88 L3.89 4.90 L3.70 4.87 L3.51 4.78 L3.34 4.65 L3.19 4.46 L3.09 4.23 L3.05 3.96 L3.07 3.68 L3.16 3.40 L3.32 3.13 L3.55 2.90 L3.84 2.72 L4.18 2.61 L4.55 2.58 L4.94 2.63 L5.31 2.79 L5.65 3.03 L5.94 3.35 L6.15 3.75 L6.28 4.20 L6.29 4.68 L6.19 5.17 L5.98 5.63 L5.65 6.05 L5.23 6.39 L4.73 6.63 L4.17 6.76 L3.58 6.75 L2.99 6.61 L2.44 6.33 L1.95 5.92 L1.56 5.40 L1.29 4.79 L1.16 4.12 L1.19 3.43 L1.38 2.74 L1.72 2.10 L2.22 1.54 L2.84 1.10 L3.55 0.81 L4.33 0.68 L5.14 0.73 L5.92 0.97 L6.65 1.39 L7.27 1.97" fill="none" stroke="#b4b4b4" stroke-width="0.72" stroke-linejoin="round"/></svg>
<svg style="left:0;top:0;" width="1016" height="630" viewBox="0 0 1016 630"><rect x="0" y="483.65" width="423.2" height="12.2" fill="#2d2d2d"/><rect x="20" y="483.65" width="8.6" height="12.2" fill="#262626"/></svg>
<svg style="left:20.3px;top:487.05px;" width="8.4" height="5.4" viewBox="0 0 8.4 5.4"><path d="M0.2 2.7 C2 -0.2 6.4 -0.2 8.2 2.7 C6.4 5.6 2 5.6 0.2 2.7 Z" fill="#d8d8d8"/><circle cx="4.2" cy="2.7" r="1.55" fill="#262626"/></svg>
<svg style="left:0;top:0;" width="1016" height="630" viewBox="0 0 1016 630"><rect x="40.4" y="485.35" width="8.4" height="8.8" fill="#1f1f1f"/><rect x="50.8" y="485.35" width="8.4" height="8.8" fill="#1f1f1f"/></svg>
<svg style="left:66.7px;top:488.25px;" width="5.4" height="3.6" viewBox="0 0 5.4 3.6"><path d="M0.5 0.5 L2.7 2.9 L4.9 0.5" stroke="#b4b4b4" stroke-width="1.1" fill="none"/></svg>
<svg style="left:0;top:0;" width="1016" height="630" viewBox="0 0 1016 630"><rect x="75" y="484.95" width="10" height="9.6" fill="#b5b0dc"/></svg>
<span id="t106" class="t" style="left:91.8px;top:484.45px;font-size:8.4px;line-height:12px;color:#b6b6b6;transform:translateX(-50%);">2</span>
<svg style="left:110.5px;top:484.85px;" width="9" height="9.8" viewBox="0 0 9 9.8"><path d="M0.5 0.5 H6.2 L8.5 2.8 V9.3 H0.5 Z" fill="#2e0904" stroke="#a2402a" stroke-width="0.75"/><text x="4.5" y="5" font-size="4.2" font-weight="700" fill="#ff9a2e" text-anchor="middle" font-family="Liberation Sans,sans-serif">Ai</text><rect x="3.5" y="6.2" width="1.9" height="1.2" fill="#ff9a2e"/></svg>
<span id="t107" class="t" style="left:123.58px;top:484.75px;font-size:8px;line-height:12px;color:#b6b6b6;letter-spacing:0.25px;">top_line_1/anime.ai</span>
<svg style="left:241.74px;top:486.23px;" width="7.92" height="7.04" viewBox="0 0 9 8"><path d="M0.6 4 A3.9 3.6 0 0 1 8.4 4 Z" fill="#cfcfcf"/><path d="M4.5 0.6 V3.8 M1.4 3.4 H7.6" stroke="#262626" stroke-width="0.7"/><path d="M4.5 4 V7.6 M2 5.4 V7 M7 5.4 V7 M1 7.4 H8 M1.2 5.4 H7.8" stroke="#cfcfcf" stroke-width="0.8" fill="none"/></svg>
<svg style="left:0;top:0;" width="1016" height="630" viewBox="0 0 1016 630"><rect x="252.4" y="485.35" width="8" height="8.8" fill="#222222"/></svg>
<svg style="left:262.9px;top:486.05px;" width="8" height="7.4" viewBox="0 0 8 7.4"><path d="M0.6 6.9 L7.4 0.5" stroke="#d4d4d4" stroke-width="1.25"/></svg>
<span id="t108" class="t" style="left:277px;top:483.65px;font-size:9.2px;line-height:12px;color:#c0c0c0;transform:translateX(-50%);letter-spacing:-0.3px;"><i>fx</i></span>
<svg style="left:0;top:0;" width="1016" height="630" viewBox="0 0 1016 630"><rect x="293" y="485.35" width="8.4" height="8.8" fill="#222222"/><rect x="303.3" y="485.35" width="8.4" height="8.8" fill="#222222"/><rect x="313.6" y="485.35" width="8.4" height="8.8" fill="#222222"/></svg>
<svg style="left:335.4px;top:484.95px;" width="9.6" height="9.6" viewBox="0 0 8.4 8.4"><path d="M4.48 4.41 L4.48 4.52 L4.43 4.63 L4.35 4.74 L4.22 4.83 L4.07 4.88 L3.89 4.90 L3.70 4.87 L3.51 4.78 L3.34 4.65 L3.19 4.46 L3.09 4.23 L3.05 3.96 L3.07 3.68 L3.16 3.40 L3.32 3.13 L3.55 2.90 L3.84 2.72 L4.18 2.61 L4.55 2.58 L4.94 2.63 L5.31 2.79 L5.65 3.03 L5.94 3.35 L6.15 3.75 L6.28 4.20 L6.29 4.68 L6.19 5.17 L5.98 5.63 L5.65 6.05 L5.23 6.39 L4.73 6.63 L4.17 6.76 L3.58 6.75 L2.99 6.61 L2.44 6.33 L1.95 5.92 L1.56 5.40 L1.29 4.79 L1.16 4.12 L1.19 3.43 L1.38 2.74 L1.72 2.10 L2.22 1.54 L2.84 1.10 L3.55 0.81 L4.33 0.68 L5.14 0.73 L5.92 0.97 L6.65 1.39 L7.27 1.97" fill="none" stroke="#b4b4b4" stroke-width="0.72" stroke-linejoin="round"/></svg>
<svg style="left:0;top:0;" width="1016" height="630" viewBox="0 0 1016 630"><rect x="349.6" y="485.05" width="59.4" height="9.6" fill="#1b1b1b" rx="1"/></svg>
<span id="t109" class="t" style="left:353.1px;top:484.45px;font-size:7.4px;line-height:12px;color:#c4c4c4;letter-spacing:-0.26px;">1. ヌル 1</span>
<svg style="left:400.7px;top:488.25px;" width="5.4" height="3.4" viewBox="0 0 5.4 3.4"><path d="M0.4 0.4 L2.7 2.8 L5 0.4" stroke="#b8b8b8" stroke-width="1" fill="none"/></svg>
<span id="t110" class="t" style="left:24.4px;top:496.65px;font-size:9.6px;line-height:12px;color:#b8b8b8;transform:translateX(-50%);letter-spacing:-0.3px;"><i>fx</i></span>
<svg style="left:93.3px;top:501.05px;" width="5.4" height="3.6" viewBox="0 0 5.4 3.6"><path d="M0.5 0.5 L2.7 2.9 L4.9 0.5" stroke="#b4b4b4" stroke-width="1.1" fill="none"/></svg>
<span id="t111" class="t" style="left:104.6px;top:497.55px;font-size:7.6px;line-height:12px;color:#c0c0c0;font-weight:500;transform:scaleX(0.836);transform-origin:0 50%;">リニアワイプ</span>
<span id="t112" class="t" style="left:242.71px;top:497.55px;font-size:7.2px;line-height:12px;color:#3a88d8;letter-spacing:-0.07px;">ﾘｾｯﾄ</span>
<svg style="left:21.9px;top:512.25px;" width="4.6" height="6.4" viewBox="0 0 4.6 6.4"><path d="M4.4 0.2 V6.2 L0.2 3.2 Z" fill="#c8c8c8"/></svg>
<svg style="left:31.5px;top:512.15px;" width="6.6" height="6.6" viewBox="0 0 6.6 6.6"><path d="M3.3 0.5 L6.1 3.3 L3.3 6.1 L0.5 3.3 Z" fill="none" stroke="#9a9a9a" stroke-width="0.9"/><path d="M3.3 2.2 L4.4 3.3 L3.3 4.4 L2.2 3.3 Z" fill="#8a8a8a"/></svg>
<svg style="left:42.7px;top:512.25px;" width="4.6" height="6.4" viewBox="0 0 4.6 6.4"><path d="M0.2 0.2 V6.2 L4.4 3.2 Z" fill="#c8c8c8"/></svg>
<svg style="left:116.6px;top:511.15px;" width="8.2" height="9.2" viewBox="0 0 7.4 8.4"><circle cx="3.7" cy="4.9" r="3" fill="none" stroke="#3a88d8" stroke-width="1"/><path d="M2.4 0.6 H5 M3.7 0.6 V1.8 M3.7 4.9 L5 3.4" stroke="#3a88d8" stroke-width="0.9"/></svg>
<svg style="left:128.3px;top:512.05px;" width="7.6" height="7.4" viewBox="0 0 7.6 7.4"><path d="M0.5 0.4 V6.2 H7.4" stroke="#a8a8a8" stroke-width="0.8" fill="none"/><path d="M1.8 4.6 L3.4 2.4 L4.6 3.6 L6.4 1" stroke="#a8a8a8" stroke-width="0.8" fill="none"/></svg>
<span id="t113" class="t" style="left:141.9px;top:510.05px;font-size:7.4px;line-height:12px;color:#c8c8c8;font-weight:500;letter-spacing:0.07px;">変換終了</span>
<span id="t114" class="t" style="left:242.75px;top:509.95px;font-size:8.8px;line-height:12px;color:#3a88d8;letter-spacing:0.1px;">16%</span>
<svg style="left:344.3px;top:510.95px;" width="9.6" height="9.6" viewBox="0 0 8.4 8.4"><path d="M4.48 4.41 L4.48 4.52 L4.43 4.63 L4.35 4.74 L4.22 4.83 L4.07 4.88 L3.89 4.90 L3.70 4.87 L3.51 4.78 L3.34 4.65 L3.19 4.46 L3.09 4.23 L3.05 3.96 L3.07 3.68 L3.16 3.40 L3.32 3.13 L3.55 2.90 L3.84 2.72 L4.18 2.61 L4.55 2.58 L4.94 2.63 L5.31 2.79 L5.65 3.03 L5.94 3.35 L6.15 3.75 L6.28 4.20 L6.29 4.68 L6.19 5.17 L5.98 5.63 L5.65 6.05 L5.23 6.39 L4.73 6.63 L4.17 6.76 L3.58 6.75 L2.99 6.61 L2.44 6.33 L1.95 5.92 L1.56 5.40 L1.29 4.79 L1.16 4.12 L1.19 3.43 L1.38 2.74 L1.72 2.10 L2.22 1.54 L2.84 1.10 L3.55 0.81 L4.33 0.68 L5.14 0.73 L5.92 0.97 L6.65 1.39 L7.27 1.97" fill="none" stroke="#b4b4b4" stroke-width="0.72" stroke-linejoin="round"/></svg>
<svg style="left:0;top:0;" width="1016" height="630" viewBox="0 0 1016 630"><rect x="0" y="522.65" width="423.2" height="12.2" fill="#2d2d2d"/><rect x="20" y="522.65" width="8.6" height="12.2" fill="#262626"/></svg>
<svg style="left:20.3px;top:526.05px;" width="8.4" height="5.4" viewBox="0 0 8.4 5.4"><path d="M0.2 2.7 C2 -0.2 6.4 -0.2 8.2 2.7 C6.4 5.6 2 5.6 0.2 2.7 Z" fill="#d8d8d8"/><circle cx="4.2" cy="2.7" r="1.55" fill="#262626"/></svg>
<svg style="left:0;top:0;" width="1016" height="630" viewBox="0 0 1016 630"><rect x="40.4" y="524.35" width="8.4" height="8.8" fill="#1f1f1f"/><rect x="50.8" y="524.35" width="8.4" height="8.8" fill="#1f1f1f"/></svg>
<svg style="left:66.8px;top:526.45px;" width="3.6" height="5.4" viewBox="0 0 3.6 5.4"><path d="M0.5 0.5 L2.9 2.7 L0.5 4.9" stroke="#b4b4b4" stroke-width="1.1" fill="none"/></svg>
<svg style="left:0;top:0;" width="1016" height="630" viewBox="0 0 1016 630"><rect x="75" y="523.95" width="10" height="9.6" fill="#b5b0dc"/></svg>
<span id="t115" class="t" style="left:91.8px;top:523.45px;font-size:8.4px;line-height:12px;color:#b6b6b6;transform:translateX(-50%);">3</span>
<svg style="left:110.5px;top:523.85px;" width="9" height="9.8" viewBox="0 0 9 9.8"><path d="M0.5 0.5 H6.2 L8.5 2.8 V9.3 H0.5 Z" fill="#2e0904" stroke="#a2402a" stroke-width="0.75"/><text x="4.5" y="5" font-size="4.2" font-weight="700" fill="#ff9a2e" text-anchor="middle" font-family="Liberation Sans,sans-serif">Ai</text><rect x="3.5" y="6.2" width="1.9" height="1.2" fill="#ff9a2e"/></svg>
<span id="t116" class="t" style="left:123.58px;top:523.75px;font-size:8px;line-height:12px;color:#b6b6b6;letter-spacing:0.25px;">top_line_2/anime.ai</span>
<svg style="left:241.74px;top:525.23px;" width="7.92" height="7.04" viewBox="0 0 9 8"><path d="M0.6 4 A3.9 3.6 0 0 1 8.4 4 Z" fill="#cfcfcf"/><path d="M4.5 0.6 V3.8 M1.4 3.4 H7.6" stroke="#262626" stroke-width="0.7"/><path d="M4.5 4 V7.6 M2 5.4 V7 M7 5.4 V7 M1 7.4 H8 M1.2 5.4 H7.8" stroke="#cfcfcf" stroke-width="0.8" fill="none"/></svg>
<svg style="left:0;top:0;" width="1016" height="630" viewBox="0 0 1016 630"><rect x="252.4" y="524.35" width="8" height="8.8" fill="#222222"/></svg>
<svg style="left:262.9px;top:525.05px;" width="8" height="7.4" viewBox="0 0 8 7.4"><path d="M0.6 6.9 L7.4 0.5" stroke="#d4d4d4" stroke-width="1.25"/></svg>
<svg style="left:0;top:0;" width="1016" height="630" viewBox="0 0 1016 630"><rect x="293" y="524.35" width="8.4" height="8.8" fill="#222222"/><rect x="303.3" y="524.35" width="8.4" height="8.8" fill="#222222"/><rect x="313.6" y="524.35" width="8.4" height="8.8" fill="#222222"/></svg>
<svg style="left:335.4px;top:523.95px;" width="9.6" height="9.6" viewBox="0 0 8.4 8.4"><path d="M4.48 4.41 L4.48 4.52 L4.43 4.63 L4.35 4.74 L4.22 4.83 L4.07 4.88 L3.89 4.90 L3.70 4.87 L3.51 4.78 L3.34 4.65 L3.19 4.46 L3.09 4.23 L3.05 3.96 L3.07 3.68 L3.16 3.40 L3.32 3.13 L3.55 2.90 L3.84 2.72 L4.18 2.61 L4.55 2.58 L4.94 2.63 L5.31 2.79 L5.65 3.03 L5.94 3.35 L6.15 3.75 L6.28 4.20 L6.29 4.68 L6.19 5.17 L5.98 5.63 L5.65 6.05 L5.23 6.39 L4.73 6.63 L4.17 6.76 L3.58 6.75 L2.99 6.61 L2.44 6.33 L1.95 5.92 L1.56 5.40 L1.29 4.79 L1.16 4.12 L1.19 3.43 L1.38 2.74 L1.72 2.10 L2.22 1.54 L2.84 1.10 L3.55 0.81 L4.33 0.68 L5.14 0.73 L5.92 0.97 L6.65 1.39 L7.27 1.97" fill="none" stroke="#b4b4b4" stroke-width="0.72" stroke-linejoin="round"/></svg>
<svg style="left:0;top:0;" width="1016" height="630" viewBox="0 0 1016 630"><rect x="349.6" y="524.05" width="59.4" height="9.6" fill="#1b1b1b" rx="1"/></svg>
<span id="t117" class="t" style="left:353.1px;top:523.45px;font-size:7.4px;line-height:12px;color:#c4c4c4;letter-spacing:-0.26px;">1. ヌル 1</span>
<svg style="left:400.7px;top:527.25px;" width="5.4" height="3.4" viewBox="0 0 5.4 3.4"><path d="M0.4 0.4 L2.7 2.8 L5 0.4" stroke="#b8b8b8" stroke-width="1" fill="none"/></svg>
<svg style="left:0;top:0;" width="1016" height="630" viewBox="0 0 1016 630"><rect x="0" y="535.65" width="423.2" height="12.2" fill="#2d2d2d"/><rect x="20" y="535.65" width="8.6" height="12.2" fill="#262626"/></svg>
<svg style="left:20.3px;top:539.05px;" width="8.4" height="5.4" viewBox="0 0 8.4 5.4"><path d="M0.2 2.7 C2 -0.2 6.4 -0.2 8.2 2.7 C6.4 5.6 2 5.6 0.2 2.7 Z" fill="#d8d8d8"/><circle cx="4.2" cy="2.7" r="1.55" fill="#262626"/></svg>
<svg style="left:0;top:0;" width="1016" height="630" viewBox="0 0 1016 630"><rect x="40.4" y="537.35" width="8.4" height="8.8" fill="#1f1f1f"/><rect x="50.8" y="537.35" width="8.4" height="8.8" fill="#1f1f1f"/></svg>
<svg style="left:66.8px;top:539.45px;" width="3.6" height="5.4" viewBox="0 0 3.6 5.4"><path d="M0.5 0.5 L2.9 2.7 L0.5 4.9" stroke="#b4b4b4" stroke-width="1.1" fill="none"/></svg>
<svg style="left:0;top:0;" width="1016" height="630" viewBox="0 0 1016 630"><rect x="75" y="536.95" width="10" height="9.6" fill="#b5b0dc"/></svg>
<span id="t118" class="t" style="left:91.8px;top:536.45px;font-size:8.4px;line-height:12px;color:#b6b6b6;transform:translateX(-50%);">4</span>
<svg style="left:110.5px;top:536.85px;" width="9" height="9.8" viewBox="0 0 9 9.8"><path d="M0.5 0.5 H6.2 L8.5 2.8 V9.3 H0.5 Z" fill="#2e0904" stroke="#a2402a" stroke-width="0.75"/><text x="4.5" y="5" font-size="4.2" font-weight="700" fill="#ff9a2e" text-anchor="middle" font-family="Liberation Sans,sans-serif">Ai</text><rect x="3.5" y="6.2" width="1.9" height="1.2" fill="#ff9a2e"/></svg>
<span id="t119" class="t" style="left:123.58px;top:536.75px;font-size:8px;line-height:12px;color:#b6b6b6;letter-spacing:0.26px;">bottom_line_1/anime.ai</span>
<svg style="left:241.74px;top:538.23px;" width="7.92" height="7.04" viewBox="0 0 9 8"><path d="M0.6 4 A3.9 3.6 0 0 1 8.4 4 Z" fill="#cfcfcf"/><path d="M4.5 0.6 V3.8 M1.4 3.4 H7.6" stroke="#262626" stroke-width="0.7"/><path d="M4.5 4 V7.6 M2 5.4 V7 M7 5.4 V7 M1 7.4 H8 M1.2 5.4 H7.8" stroke="#cfcfcf" stroke-width="0.8" fill="none"/></svg>
<svg style="left:0;top:0;" width="1016" height="630" viewBox="0 0 1016 630"><rect x="252.4" y="537.35" width="8" height="8.8" fill="#222222"/></svg>
<svg style="left:262.9px;top:538.05px;" width="8" height="7.4" viewBox="0 0 8 7.4"><path d="M0.6 6.9 L7.4 0.5" stroke="#d4d4d4" stroke-width="1.25"/></svg>
<svg style="left:0;top:0;" width="1016" height="630" viewBox="0 0 1016 630"><rect x="293" y="537.35" width="8.4" height="8.8" fill="#222222"/><rect x="303.3" y="537.35" width="8.4" height="8.8" fill="#222222"/><rect x="313.6" y="537.35" width="8.4" height="8.8" fill="#222222"/></svg>
<svg style="left:335.4px;top:536.95px;" width="9.6" height="9.6" viewBox="0 0 8.4 8.4"><path d="M4.48 4.41 L4.48 4.52 L4.43 4.63 L4.35 4.74 L4.22 4.83 L4.07 4.88 L3.89 4.90 L3.70 4.87 L3.51 4.78 L3.34 4.65 L3.19 4.46 L3.09 4.23 L3.05 3.96 L3.07 3.68 L3.16 3.40 L3.32 3.13 L3.55 2.90 L3.84 2.72 L4.18 2.61 L4.55 2.58 L4.94 2.63 L5.31 2.79 L5.65 3.03 L5.94 3.35 L6.15 3.75 L6.28 4.20 L6.29 4.68 L6.19 5.17 L5.98 5.63 L5.65 6.05 L5.23 6.39 L4.73 6.63 L4.17 6.76 L3.58 6.75 L2.99 6.61 L2.44 6.33 L1.95 5.92 L1.56 5.40 L1.29 4.79 L1.16 4.12 L1.19 3.43 L1.38 2.74 L1.72 2.10 L2.22 1.54 L2.84 1.10 L3.55 0.81 L4.33 0.68 L5.14 0.73 L5.92 0.97 L6.65 1.39 L7.27 1.97" fill="none" stroke="#b4b4b4" stroke-width="0.72" stroke-linejoin="round"/></svg>
<svg style="left:0;top:0;" width="1016" height="630" viewBox="0 0 1016 630"><rect x="349.6" y="537.05" width="59.4" height="9.6" fill="#1b1b1b" rx="1"/></svg>
<span id="t120" class="t" style="left:353.1px;top:536.45px;font-size:7.4px;line-height:12px;color:#c4c4c4;letter-spacing:-0.26px;">1. ヌル 1</span>
<svg style="left:400.7px;top:540.25px;" width="5.4" height="3.4" viewBox="0 0 5.4 3.4"><path d="M0.4 0.4 L2.7 2.8 L5 0.4" stroke="#b8b8b8" stroke-width="1" fill="none"/></svg>
<svg style="left:0;top:0;" width="1016" height="630" viewBox="0 0 1016 630"><rect x="0" y="548.65" width="423.2" height="12.2" fill="#2d2d2d"/><rect x="20" y="548.65" width="8.6" height="12.2" fill="#262626"/></svg>
<svg style="left:20.3px;top:552.05px;" width="8.4" height="5.4" viewBox="0 0 8.4 5.4"><path d="M0.2 2.7 C2 -0.2 6.4 -0.2 8.2 2.7 C6.4 5.6 2 5.6 0.2 2.7 Z" fill="#d8d8d8"/><circle cx="4.2" cy="2.7" r="1.55" fill="#262626"/></svg>
<svg style="left:0;top:0;" width="1016" height="630" viewBox="0 0 1016 630"><rect x="40.4" y="550.35" width="8.4" height="8.8" fill="#1f1f1f"/><rect x="50.8" y="550.35" width="8.4" height="8.8" fill="#1f1f1f"/></svg>
<svg style="left:66.8px;top:552.45px;" width="3.6" height="5.4" viewBox="0 0 3.6 5.4"><path d="M0.5 0.5 L2.9 2.7 L0.5 4.9" stroke="#b4b4b4" stroke-width="1.1" fill="none"/></svg>
<svg style="left:0;top:0;" width="1016" height="630" viewBox="0 0 1016 630"><rect x="75" y="549.95" width="10" height="9.6" fill="#b5b0dc"/></svg>
<span id="t121" class="t" style="left:91.8px;top:549.45px;font-size:8.4px;line-height:12px;color:#b6b6b6;transform:translateX(-50%);">5</span>
<svg style="left:110.5px;top:549.85px;" width="9" height="9.8" viewBox="0 0 9 9.8"><path d="M0.5 0.5 H6.2 L8.5 2.8 V9.3 H0.5 Z" fill="#2e0904" stroke="#a2402a" stroke-width="0.75"/><text x="4.5" y="5" font-size="4.2" font-weight="700" fill="#ff9a2e" text-anchor="middle" font-family="Liberation Sans,sans-serif">Ai</text><rect x="3.5" y="6.2" width="1.9" height="1.2" fill="#ff9a2e"/></svg>
<span id="t122" class="t" style="left:123.58px;top:549.75px;font-size:8px;line-height:12px;color:#b6b6b6;letter-spacing:0.26px;">bottom_line_2/anime.ai</span>
<svg style="left:241.74px;top:551.23px;" width="7.92" height="7.04" viewBox="0 0 9 8"><path d="M0.6 4 A3.9 3.6 0 0 1 8.4 4 Z" fill="#cfcfcf"/><path d="M4.5 0.6 V3.8 M1.4 3.4 H7.6" stroke="#262626" stroke-width="0.7"/><path d="M4.5 4 V7.6 M2 5.4 V7 M7 5.4 V7 M1 7.4 H8 M1.2 5.4 H7.8" stroke="#cfcfcf" stroke-width="0.8" fill="none"/></svg>
<svg style="left:0;top:0;" width="1016" height="630" viewBox="0 0 1016 630"><rect x="252.4" y="550.35" width="8" height="8.8" fill="#222222"/></svg>
<svg style="left:262.9px;top:551.05px;" width="8" height="7.4" viewBox="0 0 8 7.4"><path d="M0.6 6.9 L7.4 0.5" stroke="#d4d4d4" stroke-width="1.25"/></svg>
<svg style="left:0;top:0;" width="1016" height="630" viewBox="0 0 1016 630"><rect x="293" y="550.35" width="8.4" height="8.8" fill="#222222"/><rect x="303.3" y="550.35" width="8.4" height="8.8" fill="#222222"/><rect x="313.6" y="550.35" width="8.4" height="8.8" fill="#222222"/></svg>
<svg style="left:335.4px;top:549.95px;" width="9.6" height="9.6" viewBox="0 0 8.4 8.4"><path d="M4.48 4.41 L4.48 4.52 L4.43 4.63 L4.35 4.74 L4.22 4.83 L4.07 4.88 L3.89 4.90 L3.70 4.87 L3.51 4.78 L3.34 4.65 L3.19 4.46 L3.09 4.23 L3.05 3.96 L3.07 3.68 L3.16 3.40 L3.32 3.13 L3.55 2.90 L3.84 2.72 L4.18 2.61 L4.55 2.58 L4.94 2.63 L5.31 2.79 L5.65 3.03 L5.94 3.35 L6.15 3.75 L6.28 4.20 L6.29 4.68 L6.19 5.17 L5.98 5.63 L5.65 6.05 L5.23 6.39 L4.73 6.63 L4.17 6.76 L3.58 6.75 L2.99 6.61 L2.44 6.33 L1.95 5.92 L1.56 5.40 L1.29 4.79 L1.16 4.12 L1.19 3.43 L1.38 2.74 L1.72 2.10 L2.22 1.54 L2.84 1.10 L3.55 0.81 L4.33 0.68 L5.14 0.73 L5.92 0.97 L6.65 1.39 L7.27 1.97" fill="none" stroke="#b4b4b4" stroke-width="0.72" stroke-linejoin="round"/></svg>
<svg style="left:0;top:0;" width="1016" height="630" viewBox="0 0 1016 630"><rect x="349.6" y="550.05" width="59.4" height="9.6" fill="#1b1b1b" rx="1"/></svg>
<span id="t123" class="t" style="left:353.1px;top:549.45px;font-size:7.4px;line-height:12px;color:#c4c4c4;letter-spacing:-0.26px;">1. ヌル 1</span>
<svg style="left:400.7px;top:553.25px;" width="5.4" height="3.4" viewBox="0 0 5.4 3.4"><path d="M0.4 0.4 L2.7 2.8 L5 0.4" stroke="#b8b8b8" stroke-width="1" fill="none"/></svg>
<svg style="left:0;top:0;" width="1016" height="630" viewBox="0 0 1016 630"><rect x="0" y="561.65" width="423.2" height="12.2" fill="#2d2d2d"/><rect x="20" y="561.65" width="8.6" height="12.2" fill="#262626"/></svg>
<svg style="left:20.3px;top:565.05px;" width="8.4" height="5.4" viewBox="0 0 8.4 5.4"><path d="M0.2 2.7 C2 -0.2 6.4 -0.2 8.2 2.7 C6.4 5.6 2 5.6 0.2 2.7 Z" fill="#d8d8d8"/><circle cx="4.2" cy="2.7" r="1.55" fill="#262626"/></svg>
<svg style="left:0;top:0;" width="1016" height="630" viewBox="0 0 1016 630"><rect x="40.4" y="563.35" width="8.4" height="8.8" fill="#1f1f1f"/><rect x="50.8" y="563.35" width="8.4" height="8.8" fill="#1f1f1f"/></svg>
<svg style="left:66.8px;top:565.45px;" width="3.6" height="5.4" viewBox="0 0 3.6 5.4"><path d="M0.5 0.5 L2.9 2.7 L0.5 4.9" stroke="#b4b4b4" stroke-width="1.1" fill="none"/></svg>
<svg style="left:0;top:0;" width="1016" height="630" viewBox="0 0 1016 630"><rect x="75" y="562.95" width="10" height="9.6" fill="#b5b0dc"/></svg>
<span id="t124" class="t" style="left:91.8px;top:562.45px;font-size:8.4px;line-height:12px;color:#b6b6b6;transform:translateX(-50%);">6</span>
<svg style="left:110.5px;top:562.85px;" width="9" height="9.8" viewBox="0 0 9 9.8"><path d="M0.5 0.5 H6.2 L8.5 2.8 V9.3 H0.5 Z" fill="#2e0904" stroke="#a2402a" stroke-width="0.75"/><text x="4.5" y="5" font-size="4.2" font-weight="700" fill="#ff9a2e" text-anchor="middle" font-family="Liberation Sans,sans-serif">Ai</text><rect x="3.5" y="6.2" width="1.9" height="1.2" fill="#ff9a2e"/></svg>
<span id="t125" class="t" style="left:123.58px;top:562.75px;font-size:8px;line-height:12px;color:#b6b6b6;letter-spacing:0.11px;">user/anime.ai</span>
<svg style="left:241.74px;top:564.23px;" width="7.92" height="7.04" viewBox="0 0 9 8"><path d="M0.6 4 A3.9 3.6 0 0 1 8.4 4 Z" fill="#cfcfcf"/><path d="M4.5 0.6 V3.8 M1.4 3.4 H7.6" stroke="#262626" stroke-width="0.7"/><path d="M4.5 4 V7.6 M2 5.4 V7 M7 5.4 V7 M1 7.4 H8 M1.2 5.4 H7.8" stroke="#cfcfcf" stroke-width="0.8" fill="none"/></svg>
<svg style="left:0;top:0;" width="1016" height="630" viewBox="0 0 1016 630"><rect x="252.4" y="563.35" width="8" height="8.8" fill="#222222"/></svg>
<svg style="left:262.9px;top:564.05px;" width="8" height="7.4" viewBox="0 0 8 7.4"><path d="M0.6 6.9 L7.4 0.5" stroke="#d4d4d4" stroke-width="1.25"/></svg>
<svg style="left:0;top:0;" width="1016" height="630" viewBox="0 0 1016 630"><rect x="293" y="563.35" width="8.4" height="8.8" fill="#222222"/><rect x="303.3" y="563.35" width="8.4" height="8.8" fill="#222222"/><rect x="313.6" y="563.35" width="8.4" height="8.8" fill="#222222"/></svg>
<svg style="left:335.4px;top:562.95px;" width="9.6" height="9.6" viewBox="0 0 8.4 8.4"><path d="M4.48 4.41 L4.48 4.52 L4.43 4.63 L4.35 4.74 L4.22 4.83 L4.07 4.88 L3.89 4.90 L3.70 4.87 L3.51 4.78 L3.34 4.65 L3.19 4.46 L3.09 4.23 L3.05 3.96 L3.07 3.68 L3.16 3.40 L3.32 3.13 L3.55 2.90 L3.84 2.72 L4.18 2.61 L4.55 2.58 L4.94 2.63 L5.31 2.79 L5.65 3.03 L5.94 3.35 L6.15 3.75 L6.28 4.20 L6.29 4.68 L6.19 5.17 L5.98 5.63 L5.65 6.05 L5.23 6.39 L4.73 6.63 L4.17 6.76 L3.58 6.75 L2.99 6.61 L2.44 6.33 L1.95 5.92 L1.56 5.40 L1.29 4.79 L1.16 4.12 L1.19 3.43 L1.38 2.74 L1.72 2.10 L2.22 1.54 L2.84 1.10 L3.55 0.81 L4.33 0.68 L5.14 0.73 L5.92 0.97 L6.65 1.39 L7.27 1.97" fill="none" stroke="#b4b4b4" stroke-width="0.72" stroke-linejoin="round"/></svg>
<svg style="left:0;top:0;" width="1016" height="630" viewBox="0 0 1016 630"><rect x="349.6" y="563.05" width="59.4" height="9.6" fill="#1b1b1b" rx="1"/></svg>
<span id="t126" class="t" style="left:353.1px;top:562.45px;font-size:7.4px;line-height:12px;color:#c4c4c4;letter-spacing:-0.26px;">1. ヌル 1</span>
<svg style="left:400.7px;top:566.25px;" width="5.4" height="3.4" viewBox="0 0 5.4 3.4"><path d="M0.4 0.4 L2.7 2.8 L5 0.4" stroke="#b8b8b8" stroke-width="1" fill="none"/></svg>
<svg style="left:0;top:0;" width="1016" height="630" viewBox="0 0 1016 630"><rect x="0" y="574.65" width="423.2" height="12.2" fill="#2d2d2d"/><rect x="20" y="574.65" width="8.6" height="12.2" fill="#262626"/></svg>
<svg style="left:20.3px;top:578.05px;" width="8.4" height="5.4" viewBox="0 0 8.4 5.4"><path d="M0.2 2.7 C2 -0.2 6.4 -0.2 8.2 2.7 C6.4 5.6 2 5.6 0.2 2.7 Z" fill="#d8d8d8"/><circle cx="4.2" cy="2.7" r="1.55" fill="#262626"/></svg>
<svg style="left:0;top:0;" width="1016" height="630" viewBox="0 0 1016 630"><rect x="40.4" y="576.35" width="8.4" height="8.8" fill="#1f1f1f"/><rect x="50.8" y="576.35" width="8.4" height="8.8" fill="#1f1f1f"/></svg>
<svg style="left:66.8px;top:578.45px;" width="3.6" height="5.4" viewBox="0 0 3.6 5.4"><path d="M0.5 0.5 L2.9 2.7 L0.5 4.9" stroke="#b4b4b4" stroke-width="1.1" fill="none"/></svg>
<svg style="left:0;top:0;" width="1016" height="630" viewBox="0 0 1016 630"><rect x="75" y="575.95" width="10" height="9.6" fill="#b5b0dc"/></svg>
<span id="t127" class="t" style="left:91.8px;top:575.45px;font-size:8.4px;line-height:12px;color:#b6b6b6;transform:translateX(-50%);">7</span>
<svg style="left:110.5px;top:575.85px;" width="9" height="9.8" viewBox="0 0 9 9.8"><path d="M0.5 0.5 H6.2 L8.5 2.8 V9.3 H0.5 Z" fill="#2e0904" stroke="#a2402a" stroke-width="0.75"/><text x="4.5" y="5" font-size="4.2" font-weight="700" fill="#ff9a2e" text-anchor="middle" font-family="Liberation Sans,sans-serif">Ai</text><rect x="3.5" y="6.2" width="1.9" height="1.2" fill="#ff9a2e"/></svg>
<span id="t128" class="t" style="left:123.58px;top:575.75px;font-size:8px;line-height:12px;color:#b6b6b6;letter-spacing:0.18px;">plate/anime.ai</span>
<svg style="left:241.74px;top:577.23px;" width="7.92" height="7.04" viewBox="0 0 9 8"><path d="M0.6 4 A3.9 3.6 0 0 1 8.4 4 Z" fill="#cfcfcf"/><path d="M4.5 0.6 V3.8 M1.4 3.4 H7.6" stroke="#262626" stroke-width="0.7"/><path d="M4.5 4 V7.6 M2 5.4 V7 M7 5.4 V7 M1 7.4 H8 M1.2 5.4 H7.8" stroke="#cfcfcf" stroke-width="0.8" fill="none"/></svg>
<svg style="left:0;top:0;" width="1016" height="630" viewBox="0 0 1016 630"><rect x="252.4" y="576.35" width="8" height="8.8" fill="#222222"/></svg>
<svg style="left:262.9px;top:577.05px;" width="8" height="7.4" viewBox="0 0 8 7.4"><path d="M0.6 6.9 L7.4 0.5" stroke="#d4d4d4" stroke-width="1.25"/></svg>
<svg style="left:0;top:0;" width="1016" height="630" viewBox="0 0 1016 630"><rect x="293" y="576.35" width="8.4" height="8.8" fill="#222222"/><rect x="303.3" y="576.35" width="8.4" height="8.8" fill="#222222"/><rect x="313.6" y="576.35" width="8.4" height="8.8" fill="#222222"/></svg>
<svg style="left:335.4px;top:575.95px;" width="9.6" height="9.6" viewBox="0 0 8.4 8.4"><path d="M4.48 4.41 L4.48 4.52 L4.43 4.63 L4.35 4.74 L4.22 4.83 L4.07 4.88 L3.89 4.90 L3.70 4.87 L3.51 4.78 L3.34 4.65 L3.19 4.46 L3.09 4.23 L3.05 3.96 L3.07 3.68 L3.16 3.40 L3.32 3.13 L3.55 2.90 L3.84 2.72 L4.18 2.61 L4.55 2.58 L4.94 2.63 L5.31 2.79 L5.65 3.03 L5.94 3.35 L6.15 3.75 L6.28 4.20 L6.29 4.68 L6.19 5.17 L5.98 5.63 L5.65 6.05 L5.23 6.39 L4.73 6.63 L4.17 6.76 L3.58 6.75 L2.99 6.61 L2.44 6.33 L1.95 5.92 L1.56 5.40 L1.29 4.79 L1.16 4.12 L1.19 3.43 L1.38 2.74 L1.72 2.10 L2.22 1.54 L2.84 1.10 L3.55 0.81 L4.33 0.68 L5.14 0.73 L5.92 0.97 L6.65 1.39 L7.27 1.97" fill="none" stroke="#b4b4b4" stroke-width="0.72" stroke-linejoin="round"/></svg>
<svg style="left:0;top:0;" width="1016" height="630" viewBox="0 0 1016 630"><rect x="349.6" y="576.05" width="59.4" height="9.6" fill="#1b1b1b" rx="1"/></svg>
<span id="t129" class="t" style="left:353.1px;top:575.45px;font-size:7.4px;line-height:12px;color:#c4c4c4;letter-spacing:-0.26px;">1. ヌル 1</span>
<svg style="left:400.7px;top:579.25px;" width="5.4" height="3.4" viewBox="0 0 5.4 3.4"><path d="M0.4 0.4 L2.7 2.8 L5 0.4" stroke="#b8b8b8" stroke-width="1" fill="none"/></svg>
<svg style="left:0;top:0;" width="1016" height="630" viewBox="0 0 1016 630"><rect x="0" y="587.65" width="423.2" height="12.2" fill="#2d2d2d"/><rect x="20" y="587.65" width="8.6" height="12.2" fill="#1e1e1e"/></svg>
<svg style="left:51.8px;top:589.35px;" width="6.4" height="8" viewBox="0 0 6.4 8"><path d="M1.6 3.6 V2.4 A1.6 1.6 0 0 1 4.8 2.4 V3.6" fill="none" stroke="#e0e0e0" stroke-width="1"/><rect x="0.3" y="3.5" width="5.8" height="4.3" rx="0.5" fill="#e0e0e0"/><rect x="2.8" y="4.8" width="0.9" height="1.6" fill="#262626"/></svg>
<svg style="left:66.8px;top:591.45px;" width="3.6" height="5.4" viewBox="0 0 3.6 5.4"><path d="M0.5 0.5 L2.9 2.7 L0.5 4.9" stroke="#b4b4b4" stroke-width="1.1" fill="none"/></svg>
<svg style="left:0;top:0;" width="1016" height="630" viewBox="0 0 1016 630"><rect x="75" y="588.95" width="10" height="9.6" fill="#b9a57e"/></svg>
<span id="t130" class="t" style="left:91.8px;top:588.45px;font-size:8.4px;line-height:12px;color:#b6b6b6;transform:translateX(-50%);">8</span>
<svg style="left:109.4px;top:589.15px;" width="12" height="9.2" viewBox="0 0 12 9.2"><rect x="0" y="0" width="12" height="9.2" fill="#9a9a9a"/><rect x="1.5" y="1" width="9" height="7.2" fill="#e8e8e8"/><rect x="2.2" y="2.6" width="2.8" height="3.2" fill="#3a7bd0"/><rect x="4.4" y="3.6" width="2.8" height="3.2" fill="#3da04a"/><rect x="6.4" y="2.2" width="2.8" height="3.2" fill="#d04a3a"/></svg>
<span id="t131" class="t" style="left:123.58px;top:588.75px;font-size:8px;line-height:12px;color:#b6b6b6;letter-spacing:0.04px;">anime</span>
<svg style="left:241.74px;top:590.23px;" width="7.92" height="7.04" viewBox="0 0 9 8"><path d="M0.6 4 A3.9 3.6 0 0 1 8.4 4 Z" fill="#cfcfcf"/><path d="M4.5 0.6 V3.8 M1.4 3.4 H7.6" stroke="#262626" stroke-width="0.7"/><path d="M4.5 4 V7.6 M2 5.4 V7 M7 5.4 V7 M1 7.4 H8 M1.2 5.4 H7.8" stroke="#cfcfcf" stroke-width="0.8" fill="none"/></svg>
<svg style="left:0;top:0;" width="1016" height="630" viewBox="0 0 1016 630"><rect x="252.4" y="589.35" width="8" height="8.8" fill="#222222"/></svg>
<svg style="left:262.9px;top:590.05px;" width="8" height="7.4" viewBox="0 0 8 7.4"><path d="M0.6 6.9 L7.4 0.5" stroke="#d4d4d4" stroke-width="1.25"/></svg>
<svg style="left:0;top:0;" width="1016" height="630" viewBox="0 0 1016 630"><rect x="293" y="589.35" width="8.4" height="8.8" fill="#222222"/><rect x="303.3" y="589.35" width="8.4" height="8.8" fill="#222222"/><rect x="313.6" y="589.35" width="8.4" height="8.8" fill="#222222"/></svg>
<svg style="left:335.4px;top:588.95px;" width="9.6" height="9.6" viewBox="0 0 8.4 8.4"><path d="M4.48 4.41 L4.48 4.52 L4.43 4.63 L4.35 4.74 L4.22 4.83 L4.07 4.88 L3.89 4.90 L3.70 4.87 L3.51 4.78 L3.34 4.65 L3.19 4.46 L3.09 4.23 L3.05 3.96 L3.07 3.68 L3.16 3.40 L3.32 3.13 L3.55 2.90 L3.84 2.72 L4.18 2.61 L4.55 2.58 L4.94 2.63 L5.31 2.79 L5.65 3.03 L5.94 3.35 L6.15 3.75 L6.28 4.20 L6.29 4.68 L6.19 5.17 L5.98 5.63 L5.65 6.05 L5.23 6.39 L4.73 6.63 L4.17 6.76 L3.58 6.75 L2.99 6.61 L2.44 6.33 L1.95 5.92 L1.56 5.40 L1.29 4.79 L1.16 4.12 L1.19 3.43 L1.38 2.74 L1.72 2.10 L2.22 1.54 L2.84 1.10 L3.55 0.81 L4.33 0.68 L5.14 0.73 L5.92 0.97 L6.65 1.39 L7.27 1.97" fill="none" stroke="#b4b4b4" stroke-width="0.72" stroke-linejoin="round"/></svg>
<svg style="left:0;top:0;" width="1016" height="630" viewBox="0 0 1016 630"><rect x="349.6" y="589.05" width="59.4" height="9.6" fill="#1b1b1b" rx="1"/></svg>
<span id="t132" class="t" style="left:353.13px;top:588.35px;font-size:6.8px;line-height:12px;color:#c4c4c4;letter-spacing:0.45px;">なし</span>
<svg style="left:400.7px;top:592.25px;" width="5.4" height="3.4" viewBox="0 0 5.4 3.4"><path d="M0.4 0.4 L2.7 2.8 L5 0.4" stroke="#b8b8b8" stroke-width="1" fill="none"/></svg>
<svg style="left:0;top:0;" width="1016" height="630" viewBox="0 0 1016 630"><rect x="0" y="598.1" width="423.2" height="31.9" fill="#252525"/><rect x="241.4" y="598.6" width="89.8" height="11.4" fill="#2c2c2c"/></svg>
<svg style="left:20.7px;top:599.9px;" width="9" height="9" viewBox="0 0 9 9"><path d="M1 2.4 L4.4 0.6 L7.8 2.4 L4.4 4.2 Z M1 4.4 L4.4 6.2 L7.8 4.4 M1 6.4 L4.4 8.2 L7.8 6.4" fill="none" stroke="#2f7fd6" stroke-width="1"/></svg>
<svg style="left:34.1px;top:599.9px;" width="9" height="9" viewBox="0 0 9 9"><circle cx="3.4" cy="3.4" r="2.8" fill="none" stroke="#c4c4c4" stroke-width="0.9"/><rect x="3.6" y="3.6" width="4.8" height="4.8" fill="none" stroke="#c4c4c4" stroke-width="0.9"/></svg>
<svg style="left:47.6px;top:599.9px;" width="8" height="9" viewBox="0 0 8 9"><path d="M1.4 0.6 H6.6 M0.4 2.6 H7.6 M1.8 2.6 V8.4 M6.2 2.6 V8.4 M1.8 4.6 H6.2 M1.8 6.6 H6.2 M4 0.6 V2.6" stroke="#c4c4c4" stroke-width="0.9" fill="none"/></svg>
<svg style="left:59px;top:600.4px;" width="9" height="8" viewBox="0 0 9 8"><rect x="0.4" y="2" width="5.6" height="4.4" rx="0.6" fill="#c4c4c4"/><path d="M6 3.4 L8.4 1.8 V6.6 L6 5 Z" fill="#c4c4c4"/><circle cx="2" cy="1.2" r="1.1" fill="#c4c4c4"/><circle cx="4.6" cy="1.2" r="1.1" fill="#c4c4c4"/></svg>
<span id="t133" class="t" style="left:88.1px;top:599.4px;font-size:7.4px;line-height:12px;color:#a8a8a8;letter-spacing:0.04px;">フレームレンダリング時間</span>
<span id="t134" class="t" style="left:180.54px;top:599.1px;font-size:6.6px;line-height:12px;color:#35b39a;letter-spacing:0.53px;">2ms</span>
<span id="t135" class="t" style="left:256.9px;top:599.4px;font-size:7.4px;line-height:12px;color:#a8a8a8;letter-spacing:0.07px;">スイッチ / モード</span>
<svg style="left:0;top:0;" width="1016" height="630" viewBox="0 0 1016 630"><rect x="423.2" y="409.6" width="0.8" height="200.4" fill="#151515"/><rect x="423.9" y="409.6" width="405.9" height="200.4" fill="#2e2e2e"/><rect x="423.9" y="409.6" width="405.9" height="7.6" fill="#1c1c1c"/><rect x="428.2" y="410.9" width="383.6" height="5.6" fill="#6a6a6a"/><rect x="811.8" y="410.9" width="13.4" height="5.6" fill="#3a3a3a"/></svg>
<div style="left:423.9px;top:410.9px;width:4.4px;height:5.6px;background:#2f8df0;border-radius:3px 0 0 3px;"></div>
<div style="left:811.8px;top:410.9px;width:4.2px;height:5.6px;background:#2f8df0;border-radius:0 3px 3px 0;"></div>
<svg style="left:0;top:0;" width="1016" height="630" viewBox="0 0 1016 630"><rect x="423.9" y="417.2" width="405.9" height="13.6" fill="#1e1e1e"/><rect x="428.9" y="426" width="0.8" height="4.2" fill="#6e6e6e"/></svg>
<div style="left:424px;top:415px;width:30px;height:14px;overflow:hidden;"><span class="t" style="left:-2.3px;top:0.5px;font-size:8.7px;line-height:12px;color:#a4a4a4;">0:00f</span></div>
<svg style="left:0;top:0;" width="1016" height="630" viewBox="0 0 1016 630"><rect x="463.02" y="426" width="0.8" height="4.2" fill="#6e6e6e"/></svg>
<span id="t136" class="t" style="left:462.92px;top:415.5px;font-size:8.7px;line-height:12px;color:#a4a4a4;transform:translateX(-50%);">05f</span>
<svg style="left:0;top:0;" width="1016" height="630" viewBox="0 0 1016 630"><rect x="497.13" y="426" width="0.8" height="4.2" fill="#6e6e6e"/></svg>
<span id="t137" class="t" style="left:497.03px;top:415.5px;font-size:8.7px;line-height:12px;color:#a4a4a4;transform:translateX(-50%);">10f</span>
<svg style="left:0;top:0;" width="1016" height="630" viewBox="0 0 1016 630"><rect x="531.25" y="426" width="0.8" height="4.2" fill="#6e6e6e"/></svg>
<span id="t138" class="t" style="left:531.14px;top:415.5px;font-size:8.7px;line-height:12px;color:#a4a4a4;transform:translateX(-50%);">15f</span>
<svg style="left:0;top:0;" width="1016" height="630" viewBox="0 0 1016 630"><rect x="565.36" y="426" width="0.8" height="4.2" fill="#6e6e6e"/></svg>
<span id="t139" class="t" style="left:565.26px;top:415.5px;font-size:8.7px;line-height:12px;color:#a4a4a4;transform:translateX(-50%);">20f</span>
<svg style="left:0;top:0;" width="1016" height="630" viewBox="0 0 1016 630"><rect x="599.48" y="426" width="0.8" height="4.2" fill="#6e6e6e"/></svg>
<span id="t140" class="t" style="left:599.38px;top:415.5px;font-size:8.7px;line-height:12px;color:#a4a4a4;transform:translateX(-50%);">25f</span>
<svg style="left:0;top:0;" width="1016" height="630" viewBox="0 0 1016 630"><rect x="633.59" y="426" width="0.8" height="4.2" fill="#6e6e6e"/></svg>
<span id="t141" class="t" style="left:633.49px;top:415.5px;font-size:8.7px;line-height:12px;color:#a4a4a4;transform:translateX(-50%);">01:00f</span>
<svg style="left:0;top:0;" width="1016" height="630" viewBox="0 0 1016 630"><rect x="667.71" y="426" width="0.8" height="4.2" fill="#6e6e6e"/></svg>
<span id="t142" class="t" style="left:667.61px;top:415.5px;font-size:8.7px;line-height:12px;color:#a4a4a4;transform:translateX(-50%);">05f</span>
<svg style="left:0;top:0;" width="1016" height="630" viewBox="0 0 1016 630"><rect x="701.82" y="426" width="0.8" height="4.2" fill="#6e6e6e"/></svg>
<span id="t143" class="t" style="left:701.72px;top:415.5px;font-size:8.7px;line-height:12px;color:#a4a4a4;transform:translateX(-50%);">10f</span>
<svg style="left:0;top:0;" width="1016" height="630" viewBox="0 0 1016 630"><rect x="735.94" y="426" width="0.8" height="4.2" fill="#6e6e6e"/></svg>
<span id="t144" class="t" style="left:735.84px;top:415.5px;font-size:8.7px;line-height:12px;color:#a4a4a4;transform:translateX(-50%);">15f</span>
<svg style="left:0;top:0;" width="1016" height="630" viewBox="0 0 1016 630"><rect x="770.05" y="426" width="0.8" height="4.2" fill="#6e6e6e"/></svg>
<span id="t145" class="t" style="left:769.95px;top:415.5px;font-size:8.7px;line-height:12px;color:#a4a4a4;transform:translateX(-50%);">20f</span>
<svg style="left:0;top:0;" width="1016" height="630" viewBox="0 0 1016 630"><rect x="804.17" y="426" width="0.8" height="4.2" fill="#6e6e6e"/></svg>
<span id="t146" class="t" style="left:804.07px;top:415.5px;font-size:8.7px;line-height:12px;color:#a4a4a4;transform:translateX(-50%);">25f</span>
<div style="left:820px;top:415px;width:9.6px;height:14px;overflow:hidden;"><span class="t" style="left:6.5px;top:0.5px;font-size:8.7px;line-height:12px;color:#a4a4a4;">00:00f</span></div>
<svg style="left:0;top:0;" width="1016" height="630" viewBox="0 0 1016 630"><rect x="423.2" y="417.2" width="0.8" height="13.6" fill="#151515"/><rect x="428.5" y="431" width="401.3" height="10.3" fill="#616361"/></svg>
<div style="left:424px;top:431.2px;width:4.6px;height:10.4px;background:#3f95ee;border-radius:3px 0 0 3px;"></div>
<svg style="left:0;top:0;" width="1016" height="630" viewBox="0 0 1016 630"><rect x="428.5" y="441.2" width="401.3" height="3.4" fill="#1d7a24"/><rect x="428.5" y="441.8" width="401.3" height="2.2" fill="#2fbf3a"/><rect x="428.5" y="444.5" width="401.3" height="0.7" fill="#1c1c1c"/><rect x="428.2" y="445.2" width="401.6" height="11.3" fill="#7b3b3b"/><rect x="428.2" y="484.25" width="401.6" height="11" fill="#76758a"/><rect x="428.2" y="523.25" width="401.6" height="11" fill="#76758a"/><rect x="428.2" y="536.25" width="401.6" height="11" fill="#76758a"/><rect x="428.2" y="549.25" width="401.6" height="11" fill="#76758a"/><rect x="428.2" y="562.25" width="401.6" height="11" fill="#76758a"/><rect x="428.2" y="575.25" width="401.6" height="11" fill="#76758a"/><rect x="428.2" y="588" width="401.6" height="10.2" fill="#7a705f"/><rect x="423.9" y="456.85" width="405.9" height="0.8" fill="#1f1f1f"/><rect x="423.9" y="469.85" width="405.9" height="0.8" fill="#1f1f1f"/><rect x="423.9" y="482.85" width="405.9" height="0.8" fill="#1f1f1f"/><rect x="423.9" y="495.85" width="405.9" height="0.8" fill="#1f1f1f"/><rect x="423.9" y="508.85" width="405.9" height="0.8" fill="#1f1f1f"/><rect x="423.9" y="521.85" width="405.9" height="0.8" fill="#1f1f1f"/><rect x="423.9" y="534.85" width="405.9" height="0.8" fill="#1f1f1f"/><rect x="423.9" y="547.85" width="405.9" height="0.8" fill="#1f1f1f"/><rect x="423.9" y="560.85" width="405.9" height="0.8" fill="#1f1f1f"/><rect x="423.9" y="573.85" width="405.9" height="0.8" fill="#1f1f1f"/><rect x="423.9" y="586.85" width="405.9" height="0.8" fill="#1f1f1f"/><rect x="552.2" y="457.75" width="6.4" height="12" fill="#3b3b3b"/><rect x="552.2" y="470.75" width="6.4" height="12" fill="#3b3b3b"/><rect x="552.2" y="496.75" width="6.4" height="12" fill="#3b3b3b"/><rect x="552.2" y="509.75" width="6.4" height="12" fill="#3b3b3b"/></svg>
<div style="left:552.4px;top:431px;width:6.4px;height:167.2px;background:rgba(255,255,255,0.045);"></div>
<svg style="left:426px;top:460px;" width="6.4" height="6.8" viewBox="0 0 6.4 6.8"><path d="M0.2 0.2 H6.2 V1.4 L4.4 3.4 L6.2 5.4 V6.6 H0.2 V5.4 L2 3.4 L0.2 1.4 Z" fill="#d6d6d6"/></svg>
<svg style="left:528.2px;top:460px;" width="6.4" height="6.8" viewBox="0 0 6.4 6.8"><path d="M0.2 0.2 H6.2 V1.4 L4.4 3.4 L6.2 5.4 V6.6 H0.2 V5.4 L2 3.4 L0.2 1.4 Z" fill="#d6d6d6"/></svg>
<svg style="left:630.4px;top:460px;" width="6.4" height="6.8" viewBox="0 0 6.4 6.8"><path d="M0.2 0.2 H6.2 V1.4 L4.4 3.4 L6.2 5.4 V6.6 H0.2 V5.4 L2 3.4 L0.2 1.4 Z" fill="#d6d6d6"/></svg>
<svg style="left:426px;top:473px;" width="6.4" height="6.8" viewBox="0 0 6.4 6.8"><path d="M0.2 0.2 H6.2 V1.4 L4.4 3.4 L6.2 5.4 V6.6 H0.2 V5.4 L2 3.4 L0.2 1.4 Z" fill="#d6d6d6"/></svg>
<svg style="left:449.8px;top:473px;" width="6.4" height="6.8" viewBox="0 0 6.4 6.8"><path d="M0.2 0.2 H6.2 V1.4 L4.4 3.4 L6.2 5.4 V6.6 H0.2 V5.4 L2 3.4 L0.2 1.4 Z" fill="#d6d6d6"/></svg>
<svg style="left:477px;top:473px;" width="6.4" height="6.8" viewBox="0 0 6.4 6.8"><path d="M0.2 0.2 H6.2 V1.4 L4.4 3.4 L6.2 5.4 V6.6 H0.2 V5.4 L2 3.4 L0.2 1.4 Z" fill="#d6d6d6"/></svg>
<svg style="left:504.4px;top:473px;" width="6.4" height="6.8" viewBox="0 0 6.4 6.8"><path d="M0.2 0.2 H6.2 V1.4 L4.4 3.4 L6.2 5.4 V6.6 H0.2 V5.4 L2 3.4 L0.2 1.4 Z" fill="#d6d6d6"/></svg>
<svg style="left:528.2px;top:473px;" width="6.4" height="6.8" viewBox="0 0 6.4 6.8"><path d="M0.2 0.2 H6.2 V1.4 L4.4 3.4 L6.2 5.4 V6.6 H0.2 V5.4 L2 3.4 L0.2 1.4 Z" fill="#d6d6d6"/></svg>
<svg style="left:552.4px;top:473px;" width="6.4" height="6.8" viewBox="0 0 6.4 6.8"><path d="M0.2 0.2 H6.2 V1.4 L4.4 3.4 L6.2 5.4 V6.6 H0.2 V5.4 L2 3.4 L0.2 1.4 Z" fill="#d6d6d6"/></svg>
<svg style="left:579.4px;top:473px;" width="6.4" height="6.8" viewBox="0 0 6.4 6.8"><path d="M0.2 0.2 H6.2 V1.4 L4.4 3.4 L6.2 5.4 V6.6 H0.2 V5.4 L2 3.4 L0.2 1.4 Z" fill="#d6d6d6"/></svg>
<svg style="left:606.8px;top:473px;" width="6.4" height="6.8" viewBox="0 0 6.4 6.8"><path d="M0.2 0.2 H6.2 V1.4 L4.4 3.4 L6.2 5.4 V6.6 H0.2 V5.4 L2 3.4 L0.2 1.4 Z" fill="#d6d6d6"/></svg>
<svg style="left:630.6px;top:473px;" width="6.4" height="6.8" viewBox="0 0 6.4 6.8"><path d="M0.2 0.2 H6.2 V1.4 L4.4 3.4 L6.2 5.4 V6.6 H0.2 V5.4 L2 3.4 L0.2 1.4 Z" fill="#777"/><path d="M0.2 0.2 H3.2 V6.6 H0.2 V5.4 L2 3.4 L0.2 1.4 Z" fill="#d6d6d6"/></svg>
<svg style="left:425.9px;top:512.1px;" width="6.6" height="6.6" viewBox="0 0 6.6 6.6"><path d="M3.3 0.2 L6.4 3.3 L3.3 6.4 L0.2 3.3 Z" fill="#d6d6d6"/></svg>
<svg style="left:476.9px;top:512.1px;" width="6.6" height="6.6" viewBox="0 0 6.6 6.6"><path d="M3.3 0.2 L6.4 3.3 L3.3 6.4 L0.2 3.3 Z" fill="#d6d6d6"/></svg>
<svg style="left:528.1px;top:512.1px;" width="6.6" height="6.6" viewBox="0 0 6.6 6.6"><path d="M3.3 0.2 L6.4 3.3 L3.3 6.4 L0.2 3.3 Z" fill="#d6d6d6"/></svg>
<svg style="left:579.3px;top:512.1px;" width="6.6" height="6.6" viewBox="0 0 6.6 6.6"><path d="M3.3 0.2 L6.4 3.3 L3.3 6.4 L0.2 3.3 Z" fill="#d6d6d6"/></svg>
<svg style="left:630.5px;top:512.1px;" width="6.6" height="6.6" viewBox="0 0 6.6 6.6"><path d="M3.3 0.2 L6.4 3.3 L3.3 6.4 L0.2 3.3 Z" fill="#6e6e6e"/><path d="M3.3 0.2 L3.3 6.4 L0.2 3.3 Z" fill="#d6d6d6"/></svg>
<svg style="left:550px;top:498.35px;" width="4" height="8" viewBox="0 0 4 8"><path d="M0.4 0.5 H3.6 M0.4 7.5 H3.6 M2 0.5 V7.5" stroke="#c8d4e0" stroke-width="1" fill="none"/></svg>
<svg style="left:0;top:0;" width="1016" height="630" viewBox="0 0 1016 630"><rect x="551.5" y="421" width="1" height="177.2" fill="#4f8ad0"/><rect x="547.4" y="410.9" width="1.4" height="5.6" fill="#7ba9e2"/></svg>
<svg style="left:548px;top:420.3px;" width="8.2" height="8.8" viewBox="0 0 8.2 8.8"><path d="M0.6 0.3 H7.6 Q8 0.3 8 0.8 V4.6 L4.1 8.6 L0.2 4.6 V0.8 Q0.2 0.3 0.6 0.3 Z" fill="#3b8fee"/><path d="M4.1 4.4 V7" stroke="#1c4f94" stroke-width="0.7"/></svg>
<svg style="left:0;top:0;" width="1016" height="630" viewBox="0 0 1016 630"><rect x="424" y="598.6" width="417.8" height="11.4" fill="#252525"/><rect x="424" y="598.6" width="74.8" height="11.4" fill="#2c2c2c"/></svg>
<svg style="left:427.6px;top:602.8px;" width="6" height="4" viewBox="0 0 6 4"><path d="M0 4 L2 1.6 L3 2.8 L4 1.8 L6 4 Z" fill="#c4c4c4"/></svg>
<div style="left:443.4px;top:601.6px;width:6px;height:6px;box-sizing:border-box;border:1px solid #c4c4c4;border-radius:50%;"></div>
<svg style="left:0;top:0;" width="1016" height="630" viewBox="0 0 1016 630"><rect x="449.4" y="604.2" width="24.6" height="0.6" fill="#4a4a4a"/></svg>
<svg style="left:482.5px;top:601.4px;" width="11" height="6" viewBox="0 0 11 6"><path d="M0 6 L3.6 1.4 L5 3.2 L7 0.4 L11 6 Z" fill="#c4c4c4"/></svg>
<svg style="left:0;top:0;" width="1016" height="630" viewBox="0 0 1016 630"><rect x="500" y="600.4" width="317" height="8" fill="#2a2a2a" rx="4"/><rect x="829.8" y="431" width="11.2" height="167.6" fill="#292929"/><rect x="829.8" y="598.6" width="11.2" height="11.4" fill="#262626"/></svg>
<svg style="left:832.3px;top:432.3px;" width="7" height="9.4" viewBox="0 0 7 9.4"><path d="M0.2 0.2 H6.8 V6 L3.5 9.2 L0.2 6 Z" fill="#c4c4c4"/></svg>
<svg style="left:830.9px;top:446.6px;" width="9" height="8" viewBox="0 0 9 8"><path d="M3.4 1.4 H8.6 V6 H3.4 Z" fill="#d0d0d0"/><path d="M0.6 5.6 L3.2 1.6 L5.2 5.2 C5.4 7 3.6 7.6 2.6 7.4 C1.2 7.4 0.4 6.6 0.6 5.6 Z" fill="#2a2a2a" stroke="#d0d0d0" stroke-width="0.7"/></svg>
<svg style="left:0;top:0;" width="1016" height="630" viewBox="0 0 1016 630"><rect x="0" y="387.6" width="841.9" height="1.3" fill="#2d5782"/><rect x="16.2" y="387.6" width="1.1" height="224.4" fill="#2d5782"/><rect x="840.9" y="387.6" width="1.1" height="224.4" fill="#2d5782"/><rect x="0" y="609.8" width="841.9" height="2.2" fill="#2d5782"/></svg>
</div></div></body></html>
